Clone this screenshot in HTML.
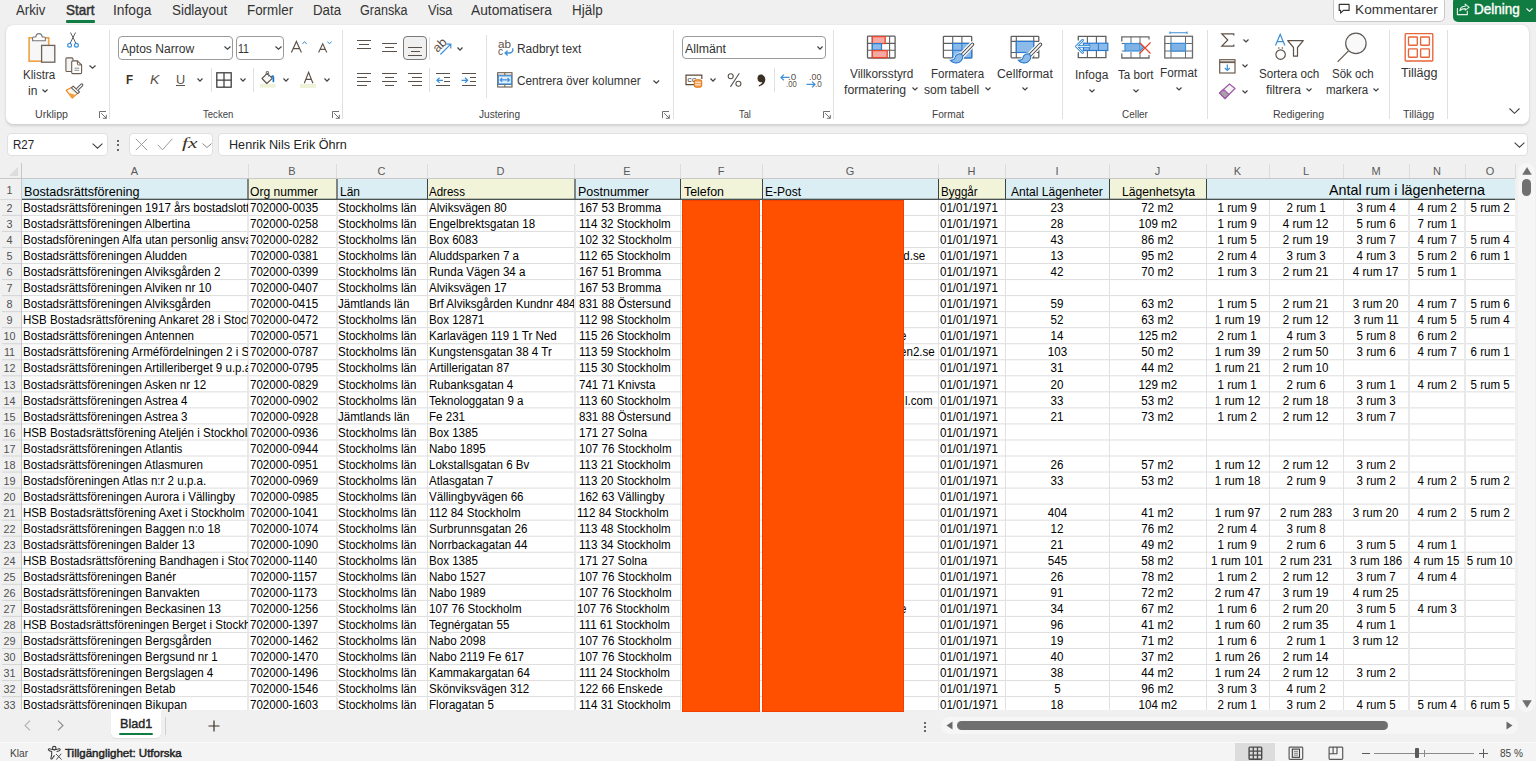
<!DOCTYPE html>
<html><head><meta charset="utf-8"><style>
*{margin:0;padding:0;box-sizing:border-box}
html,body{width:1536px;height:761px;overflow:hidden;background:#f0f0f0;font-family:"Liberation Sans", sans-serif;color:#1f1f1f;position:relative}
.a{position:absolute;white-space:nowrap}
.t{position:absolute;white-space:nowrap;line-height:1}
.cell{position:absolute;white-space:nowrap;overflow:hidden;font-size:12.5px;line-height:16px;height:16px;color:#000}
.cell span{display:inline-block;transform:scaleX(0.925);transform-origin:0 50%}
.cell.c span{transform-origin:50% 50%}
.cell.h{font-size:12.9px;height:19px;line-height:19px}
.hl{position:absolute;background:#e1e1e1}
svg{position:absolute;overflow:visible}
</style></head>
<body>
<div class="a" style="left:66px;top:20px;width:29px;height:2.5px;background:#107c41;border-radius:1px"></div>
<div class="a" style="left:1333px;top:-3px;width:112px;height:25px;background:#fff;border:1px solid #c7c7c7;border-radius:5px"></div>
<svg style="left:1334px;top:0px" width="20" height="16" viewBox="1334 0 20 16"><path d="M1339.2 4.4H1349.1V10.4H1343.4L1340.6 13.1V10.4H1339.2Z" fill="none" stroke="#333" stroke-width="1.15" stroke-linejoin="round"/></svg>
<div class="a" style="left:1453px;top:-3px;width:90px;height:24.5px;background:#107c41;border-radius:5px"></div>
<svg style="left:1452px;top:0px" width="22" height="18" viewBox="1452 0 22 18"><path d="M1457.4 8.1V14.6H1467.3V10.8" fill="none" stroke="#e8f3ec" stroke-width="1.1"/><path d="M1459.9 10.6C1460.2 7.8 1462 6.3 1465.2 6.2V4.1L1469.1 7.4 1465.2 10.1V8.6C1462.9 8.6 1461.3 9.2 1459.9 10.6Z" fill="none" stroke="#e8f3ec" stroke-width="1.05" stroke-linejoin="round"/></svg>
<svg style="left:1526px;top:8px" width="7" height="4" viewBox="0 0 7 4"><path d="M0.5 0.5L3.5 3.3 6.5 0.5" fill="none" stroke="#fff" stroke-width="1.1"/></svg>
<div class="a" style="left:5.5px;top:25px;width:1523px;height:99px;background:#fff;border-radius:7px;box-shadow:0 1.5px 3px rgba(0,0,0,0.13),0 0 1px rgba(0,0,0,0.10)"></div>
<div class="a" style="left:109px;top:30px;width:1px;height:88.5px;background:#e0e0e0"></div>
<div class="a" style="left:342px;top:30px;width:1px;height:88.5px;background:#e0e0e0"></div>
<div class="a" style="left:673px;top:30px;width:1px;height:88.5px;background:#e0e0e0"></div>
<div class="a" style="left:833px;top:30px;width:1px;height:88.5px;background:#e0e0e0"></div>
<div class="a" style="left:1062px;top:30px;width:1px;height:88.5px;background:#e0e0e0"></div>
<div class="a" style="left:1207px;top:30px;width:1px;height:88.5px;background:#e0e0e0"></div>
<div class="a" style="left:1389px;top:30px;width:1px;height:88.5px;background:#e0e0e0"></div>
<div class="a" style="left:1447px;top:30px;width:1px;height:88.5px;background:#e0e0e0"></div>
<svg style="left:98.5px;top:110.5px" width="8" height="8" viewBox="0 0 8 8"><path d="M0.5 7V0.5H7M2.2 2.2L7.3 7.3M7.3 3.8V7.3H3.8" fill="none" stroke="#616161" stroke-width="0.9"/></svg>
<svg style="left:331.6px;top:110.5px" width="8" height="8" viewBox="0 0 8 8"><path d="M0.5 7V0.5H7M2.2 2.2L7.3 7.3M7.3 3.8V7.3H3.8" fill="none" stroke="#616161" stroke-width="0.9"/></svg>
<svg style="left:662px;top:110.5px" width="8" height="8" viewBox="0 0 8 8"><path d="M0.5 7V0.5H7M2.2 2.2L7.3 7.3M7.3 3.8V7.3H3.8" fill="none" stroke="#616161" stroke-width="0.9"/></svg>
<svg style="left:822.5px;top:110.5px" width="8" height="8" viewBox="0 0 8 8"><path d="M0.5 7V0.5H7M2.2 2.2L7.3 7.3M7.3 3.8V7.3H3.8" fill="none" stroke="#616161" stroke-width="0.9"/></svg>
<svg style="left:1509px;top:107.5px" width="11" height="6" viewBox="0 0 11 6"><path d="M0.5 0.5L5.5 5.3 10.5 0.5" fill="none" stroke="#424242" stroke-width="1.1"/></svg>
<svg style="left:27px;top:32px" width="30" height="32" viewBox="0 0 30 32">
      <rect x="2.1" y="5.8" width="19.6" height="23.4" fill="#f7f7f7" stroke="#f0a040" stroke-width="1.6"/>
      <path d="M5.6 8.7V6C5.6 5.4 6 5 6.6 5H8.8C9 2.8 10 1.6 12 1.6S15 2.8 15.2 5H17.4C18 5 18.4 5.4 18.4 6V8.7z" fill="#fff" stroke="#767676" stroke-width="1.1"/>
      <rect x="14.6" y="13.4" width="13.2" height="16.8" fill="#f7f7f7" stroke="#6b6258" stroke-width="1.3"/>
    </svg>
<svg style="left:41.5px;top:89px" width="6" height="4" viewBox="0 0 6 4"><path d="M0.5 0.5L3 3 5.5 0.5" fill="none" stroke="#424242" stroke-width="1.2"/></svg>
<svg style="left:67px;top:32px" width="12" height="16" viewBox="0 0 12 16">
      <path d="M3 11.5L8.5 0.5M9 11.5L3.5 0.5" fill="none" stroke="#616161" stroke-width="1"/>
      <circle cx="2.6" cy="13.3" r="1.9" fill="none" stroke="#3c8fd9" stroke-width="1.2"/>
      <circle cx="9.4" cy="13.3" r="1.9" fill="none" stroke="#3c8fd9" stroke-width="1.2"/>
    </svg>
<svg style="left:62px;top:54px" width="24" height="22" viewBox="0 0 24 22">
      <path d="M11 6.4V5C11 4.3 10.5 3.9 9.9 3.9H5C4.4 3.9 3.9 4.4 3.9 5V16.4C3.9 17 4.4 17.5 5 17.5H9.7" fill="#f4f4f4" stroke="#6b5c4e" stroke-width="1.1"/>
      <path d="M9.7 7.9C9.7 7.3 10.2 6.9 10.8 6.9H15.4L19.6 10.9V18.5C19.6 19.1 19.1 19.6 18.5 19.6H10.8C10.2 19.6 9.7 19.1 9.7 18.5Z" fill="#fff" stroke="#6b5c4e" stroke-width="1.1" stroke-linejoin="round"/>
      <path d="M15.4 6.9V10C15.4 10.5 15.8 10.9 16.3 10.9H19.6" fill="none" stroke="#6b5c4e" stroke-width="1"/>
      <path d="M12.4 14.2H17.2M12.4 16.3H17.2" stroke="#808080" stroke-width="0.9"/>
    </svg>
<svg style="left:89px;top:65px" width="7" height="4" viewBox="0 0 7 4"><path d="M0.5 0.5L3.5 3.2 6.5 0.5" fill="none" stroke="#424242" stroke-width="1.2"/></svg>
<svg style="left:62px;top:82px" width="24" height="18" viewBox="0 0 24 18">
      <path d="M4.2 8.3L10.3 16.1 16.3 10.7 11.2 4.6Z" fill="#fff4ea" stroke="#e8891f" stroke-width="1.1" stroke-linejoin="round"/>
      <path d="M6.2 10.8L10.3 16.1 13.6 13.1Z" fill="#f0a040"/>
      <path d="M11.2 4.2L17.5 10 15.7 11.7 9.4 5.9Z" fill="#fff" stroke="#5f5f5f" stroke-width="1.1" stroke-linejoin="round"/>
      <path d="M14.2 6.8L19 2.2C19.5 1.7 20.2 1.8 20.6 2.3 21 2.8 21 3.4 20.5 3.9L15.8 8.4" fill="#fff" stroke="#5f5f5f" stroke-width="1.1"/>
    </svg>
<div class="a" style="left:118.3px;top:36px;width:114.5px;height:23.5px;border:1px solid #9a9a9a;border-radius:4px;background:#fff"></div>
<svg style="left:224px;top:46.3px" width="7" height="4" viewBox="0 0 7 4"><path d="M0.5 0.5L3.5 3.2 6.5 0.5" fill="none" stroke="#424242" stroke-width="1.2"/></svg>
<div class="a" style="left:235.5px;top:36px;width:48.5px;height:23.5px;border:1px solid #9a9a9a;border-radius:4px;background:#fff"></div>
<svg style="left:275px;top:46.3px" width="7" height="4" viewBox="0 0 7 4"><path d="M0.5 0.5L3.5 3.2 6.5 0.5" fill="none" stroke="#424242" stroke-width="1.2"/></svg>
<svg style="left:288px;top:39px" width="16" height="16" viewBox="288 39 16 16"><path d="M291.4 52.6L296.4 41.5 301.4 52.6M293.1 48.6H299.7" fill="none" stroke="#5c5148" stroke-width="1.15"/></svg>
<svg style="left:302px;top:41px" width="5" height="3.5" viewBox="0 0 5 3.5"><path d="M0.4 3L2.5 0.6 4.6 3" fill="none" stroke="#3c8fd9" stroke-width="1"/></svg>
<svg style="left:316px;top:41px" width="14" height="14" viewBox="316 41 14 14"><path d="M318.6 52.6L322.7 43.8 326.8 52.6M320 49.4H325.4" fill="none" stroke="#5c5148" stroke-width="1.1"/></svg>
<svg style="left:327px;top:41px" width="5" height="3.5" viewBox="0 0 5 3.5"><path d="M0.4 0.5L2.5 2.9 4.6 0.5" fill="none" stroke="#3c8fd9" stroke-width="1"/></svg>
<div class="a" style="left:175.6px;top:85.2px;width:9.5px;height:1px;background:#5c5148"></div>
<svg style="left:196.9px;top:78.3px" width="6" height="4" viewBox="0 0 6 4"><path d="M0.5 0.5L3 3.2 5.5 0.5" fill="none" stroke="#424242" stroke-width="1.2"/></svg>
<svg style="left:240px;top:78.3px" width="6" height="4" viewBox="0 0 6 4"><path d="M0.5 0.5L3 3.2 5.5 0.5" fill="none" stroke="#424242" stroke-width="1.2"/></svg>
<svg style="left:283px;top:78.3px" width="6" height="4" viewBox="0 0 6 4"><path d="M0.5 0.5L3 3.2 5.5 0.5" fill="none" stroke="#424242" stroke-width="1.2"/></svg>
<svg style="left:323.75px;top:78.3px" width="6" height="4" viewBox="0 0 6 4"><path d="M0.5 0.5L3 3.2 5.5 0.5" fill="none" stroke="#424242" stroke-width="1.2"/></svg>
<div class="a" style="left:210.5px;top:68px;width:1px;height:24px;background:#e0e0e0"></div>
<div class="a" style="left:253.4px;top:68px;width:1px;height:24px;background:#e0e0e0"></div>
<svg style="left:216px;top:72px" width="16" height="16" viewBox="0 0 16 16"><rect x="0.8" y="0.8" width="14.4" height="14.4" fill="none" stroke="#3f3f3f" stroke-width="1.3"/><path d="M8 0.8V15.2M0.8 8H15.2" stroke="#3f3f3f" stroke-width="1.25"/></svg>
<svg style="left:255px;top:66px" width="24" height="24" viewBox="255 66 24 24">
      <rect x="260" y="84" width="15.6" height="3.6" fill="#eef2d6"/>
      <path d="M262 78.5L267.2 73.3 272.3 78.3 266.8 83.5Z" fill="#f8f8f8" stroke="#5c5148" stroke-width="1.1" stroke-linejoin="round"/>
      <path d="M266.2 75V72.4C266.2 71.2 268.6 71.2 268.6 72.4V76.6" fill="none" stroke="#7a7a7a" stroke-width="1.1"/>
      <path d="M271.9 76.4C273.1 75.6 273.5 76.9 273.4 78V81.4" fill="none" stroke="#1a73c8" stroke-width="1.7" stroke-linecap="round"/>
    </svg>
<div class="a" style="left:300.3px;top:84px;width:15.9px;height:3.6px;background:#eef2d6"></div>
<svg style="left:300px;top:70px" width="16" height="15" viewBox="300 70 16 15"><path d="M304.3 83.2L308.6 72.4 312.9 83.2M305.8 79.3H311.4" fill="none" stroke="#5c5148" stroke-width="1.15"/></svg>
<div class="a" style="left:356.6px;top:39.699999999999996px;width:14.4px;height:1.2px;background:#5c5148"></div><div class="a" style="left:359.0px;top:44.0px;width:9.6px;height:1.2px;background:#5c5148"></div><div class="a" style="left:356.6px;top:48.0px;width:14.4px;height:1.2px;background:#5c5148"></div>
<div class="a" style="left:382px;top:42.699999999999996px;width:14.5px;height:1.2px;background:#5c5148"></div><div class="a" style="left:384.7px;top:46.8px;width:9.3px;height:1.2px;background:#5c5148"></div><div class="a" style="left:382px;top:50.9px;width:14.5px;height:1.2px;background:#5c5148"></div>
<div class="a" style="left:403.3px;top:36.4px;width:23.3px;height:23.2px;border:1px solid #7a7a7a;border-radius:4px;background:#f0f0f0"></div>
<div class="a" style="left:408.2px;top:46.8px;width:13.8px;height:1.2px;background:#5c5148"></div><div class="a" style="left:410.5px;top:50.8px;width:9.5px;height:1.2px;background:#5c5148"></div><div class="a" style="left:408.2px;top:54.699999999999996px;width:13.8px;height:1.2px;background:#5c5148"></div>
<div class="a" style="left:429px;top:36.5px;width:1px;height:23px;background:#e0e0e0"></div>
<svg style="left:434px;top:38px" width="20" height="18" viewBox="0 0 20 18">
      <text x="0" y="0" transform="translate(3.4,15) rotate(-45)" font-family="Liberation Sans" font-size="12.4" fill="#5c5148" textLength="14.5" lengthAdjust="spacingAndGlyphs">ab</text>
      <path d="M6.4 16.5L16.5 6.3M12.5 6.2H16.8V10.5" fill="none" stroke="#3c8fd9" stroke-width="1.2"/>
    </svg>
<svg style="left:457px;top:47px" width="6" height="4" viewBox="0 0 6 4"><path d="M0.5 0.5L3 3.2 5.5 0.5" fill="none" stroke="#424242" stroke-width="1.2"/></svg>
<div class="a" style="left:356.6px;top:72.9px;width:14.4px;height:1.2px;background:#5c5148"></div><div class="a" style="left:356.6px;top:77.0px;width:10.4px;height:1.2px;background:#5c5148"></div><div class="a" style="left:356.6px;top:81.0px;width:14.4px;height:1.2px;background:#5c5148"></div><div class="a" style="left:356.6px;top:85.0px;width:10.4px;height:1.2px;background:#5c5148"></div>
<div class="a" style="left:382px;top:72.9px;width:14.5px;height:1.2px;background:#5c5148"></div><div class="a" style="left:384.5px;top:77.0px;width:9.8px;height:1.2px;background:#5c5148"></div><div class="a" style="left:382px;top:81.0px;width:14.5px;height:1.2px;background:#5c5148"></div><div class="a" style="left:384.5px;top:85.0px;width:9.8px;height:1.2px;background:#5c5148"></div>
<div class="a" style="left:407.8px;top:72.9px;width:14.2px;height:1.2px;background:#5c5148"></div><div class="a" style="left:411.8px;top:77.0px;width:10.2px;height:1.2px;background:#5c5148"></div><div class="a" style="left:407.8px;top:81.0px;width:14.2px;height:1.2px;background:#5c5148"></div><div class="a" style="left:411.8px;top:85.0px;width:10.2px;height:1.2px;background:#5c5148"></div>
<div class="a" style="left:429px;top:68px;width:1px;height:24px;background:#e0e0e0"></div>
<div class="a" style="left:436px;top:72.9px;width:14px;height:1.2px;background:#5c5148"></div><div class="a" style="left:444px;top:77.0px;width:6px;height:1.2px;background:#5c5148"></div><div class="a" style="left:444px;top:81.0px;width:6px;height:1.2px;background:#5c5148"></div><div class="a" style="left:436px;top:85.0px;width:14px;height:1.2px;background:#5c5148"></div>
<div class="a" style="left:461.6px;top:72.9px;width:14.4px;height:1.2px;background:#5c5148"></div><div class="a" style="left:470.0px;top:77.0px;width:6.0px;height:1.2px;background:#5c5148"></div><div class="a" style="left:470.0px;top:81.0px;width:6.0px;height:1.2px;background:#5c5148"></div><div class="a" style="left:461.6px;top:85.0px;width:14.4px;height:1.2px;background:#5c5148"></div>
<svg style="left:435.5px;top:76.5px" width="8" height="7" viewBox="0 0 8 7"><path d="M7 3.3H1M3.6 0.7L0.9 3.3 3.6 5.9" fill="none" stroke="#3c8fd9" stroke-width="1.2"/></svg>
<svg style="left:461.2px;top:76.5px" width="8" height="7" viewBox="0 0 8 7"><path d="M0.5 3.3H6.7M4 0.7L6.7 3.3 4 5.9" fill="none" stroke="#3c8fd9" stroke-width="1.2"/></svg>
<div class="a" style="left:486px;top:34.5px;width:1px;height:63px;background:#e0e0e0"></div>
<svg style="left:498px;top:40px" width="17" height="17" viewBox="0 0 17 17">
      <text x="0" y="7.8" font-family="Liberation Sans" font-size="10" fill="#5c5148" textLength="13" lengthAdjust="spacingAndGlyphs">ab</text>
      <text x="0" y="15" font-family="Liberation Sans" font-size="10" fill="#5c5148">c</text>
      <path d="M14.6 8.2C15.4 11 14 13 11.5 13H7.2M9.6 10.6L7.1 13 9.6 15.5" fill="none" stroke="#3c8fd9" stroke-width="1.3"/>
    </svg>
<svg style="left:496.5px;top:72px" width="16" height="16" viewBox="0 0 16 16">
      <rect x="0.7" y="0.7" width="14.3" height="14.3" fill="#fff" stroke="#6b5c4e" stroke-width="1.1"/>
      <path d="M7.85 0.7V3.5M7.85 12.2V15M0.7 3.2H15M0.7 12.5H15" stroke="#6b5c4e" stroke-width="1"/>
      <rect x="1.3" y="3.8" width="13.2" height="8.2" fill="#e3eefb" stroke="#3c8fd9" stroke-width="1.2"/>
      <path d="M3.3 7.9H12.4M5.2 6L3.2 7.9 5.2 9.8M10.5 6L12.5 7.9 10.5 9.8" fill="none" stroke="#3c8fd9" stroke-width="1.1"/>
    </svg>
<svg style="left:653px;top:80.3px" width="7" height="4" viewBox="0 0 7 4"><path d="M0.5 0.5L3.3 3.2 6.1 0.5" fill="none" stroke="#424242" stroke-width="1.2"/></svg>
<div class="a" style="left:682.4px;top:36.2px;width:143.3px;height:23.3px;border:1px solid #9a9a9a;border-radius:4px;background:#fff"></div>
<svg style="left:817px;top:46.3px" width="7" height="4" viewBox="0 0 7 4"><path d="M0.5 0.5L3 3.2 5.5 0.5" fill="none" stroke="#424242" stroke-width="1.2"/></svg>
<svg style="left:682px;top:70px" width="24" height="20" viewBox="0 0 24 20">
      <path d="M12 14.6H4V5.2H19.8V9" fill="none" stroke="#5a4a3a" stroke-width="1.2"/>
      <text x="5.2" y="12.3" font-family="Liberation Sans" font-size="7" fill="#4a4a4a" textLength="9" lengthAdjust="spacingAndGlyphs">cc</text>
      <rect x="12.3" y="9.7" width="7.4" height="7.6" rx="2.2" fill="#f0a050" stroke="#e07b20" stroke-width="1.1"/>
      <path d="M13.2 12.3H18.8M13.2 14.8H18.8" stroke="#fff" stroke-width="0.9"/>
    </svg>
<svg style="left:710px;top:78.4px" width="6" height="4" viewBox="0 0 6 4"><path d="M0.5 0.5L3 3.2 5.5 0.5" fill="none" stroke="#424242" stroke-width="1.2"/></svg>
<svg style="left:725px;top:71px" width="18" height="18" viewBox="0 0 18 18"><circle cx="5.7" cy="5.3" r="2.5" fill="none" stroke="#5a5550" stroke-width="1.1"/><circle cx="13.4" cy="12.75" r="2.5" fill="none" stroke="#5a5550" stroke-width="1.1"/><path d="M14.3 2.2L5.4 15.9" stroke="#5a5550" stroke-width="1.1"/></svg>
<svg style="left:756.5px;top:74.2px" width="9" height="13" viewBox="0 0 9 13"><path d="M3.8 0.5C6.4 0.5 8.3 2.6 8.3 5.4 8.3 8.8 5.8 11.6 2 12.4L1.5 11.4C3.6 10.6 5 9.3 5.4 7.9 5 8.1 4.5 8.2 4 8.2 2 8.2 0.5 6.6 0.5 4.4S1.8 0.5 3.8 0.5z" fill="#3b3026"/></svg>
<div class="a" style="left:774px;top:68.4px;width:1px;height:23.3px;background:#e0e0e0"></div>
<svg style="left:780px;top:73.5px" width="10" height="7" viewBox="0 0 10 7"><path d="M9.5 3.4H1M3.9 0.6L1 3.4 3.9 6.2" fill="none" stroke="#3c8fd9" stroke-width="1.2"/></svg>
<svg style="left:806px;top:80.5px" width="10" height="7" viewBox="0 0 10 7"><path d="M0.5 3.4H9M6.1 0.6L9 3.4 6.1 6.2" fill="none" stroke="#3c8fd9" stroke-width="1.2"/></svg>
<svg style="left:862px;top:32px" width="38" height="30" viewBox="0 0 38 30">
      <rect x="5.5" y="4.1" width="27.6" height="21.9" rx="0.8" fill="#fff" stroke="#5f5f5f" stroke-width="1.3"/>
      <path d="M27.6 4.1V26M5.5 11.4H33.1M5.5 18.3H33.1M10.25 4.1V26" stroke="#5f5f5f" stroke-width="1.1"/>
      <rect x="10.3" y="4.6" width="12.9" height="6.9" fill="#f4aaa2" stroke="#e8472b" stroke-width="1.3"/>
      <rect x="10.3" y="11.6" width="9.2" height="6.5" fill="#8dbbe9" stroke="#2a7bd0" stroke-width="1.2"/>
      <rect x="10.3" y="18.6" width="14.9" height="7" fill="#f4aaa2" stroke="#e8472b" stroke-width="1.3"/>
    </svg>
<svg style="left:911.5px;top:86.8px" width="6" height="4" viewBox="0 0 6 4"><path d="M0.5 0.5L3 3 5.5 0.5" fill="none" stroke="#424242" stroke-width="1.2"/></svg>
<svg style="left:940px;top:32px" width="40" height="34" viewBox="0 0 40 34">
      <rect x="3.4" y="4.3" width="28.3" height="21.6" rx="0.8" fill="#fff" stroke="#5f5f5f" stroke-width="1.3"/>
      <path d="M12.7 4.3V25.9M21.9 4.3V25.9M3.4 11.4H31.7M3.4 18.3H31.7" stroke="#5f5f5f" stroke-width="1.1"/>
      <rect x="12.7" y="11.4" width="19" height="14.5" fill="#8dbbe9" stroke="#2a7bd0" stroke-width="1.2"/>
      <path d="M21.9 11.4V25.9M12.7 18.3H31.7" stroke="#2a7bd0" stroke-width="1"/>
      <path d="M32.4 12.4L21.6 23.6" stroke="#fff" stroke-width="6" stroke-linecap="round"/>
      <path d="M21.8 22.3C18.8 21 15.6 22.6 15 25.6 14.6 27.4 13 28.3 10.4 28.3 12.6 30.8 16.5 31.6 19.3 30.2 22.3 28.7 23.6 25.6 21.8 22.3Z" fill="#fff" stroke="#fff" stroke-width="2.6"/>
      <path d="M32.4 12.4L21.6 23.6" stroke="#4a4a4a" stroke-width="3.6" stroke-linecap="round"/>
      <path d="M32.4 12.4L21.6 23.6" stroke="#fff" stroke-width="1.6" stroke-linecap="round"/>
      <path d="M21.8 22.3C18.8 21 15.6 22.6 15 25.6 14.6 27.4 13 28.3 10.4 28.3 12.6 30.8 16.5 31.6 19.3 30.2 22.3 28.7 23.6 25.6 21.8 22.3Z" fill="#8dbbe9" stroke="#2a7bd0" stroke-width="1.1"/>
    </svg>
<svg style="left:984.5px;top:86.8px" width="6" height="4" viewBox="0 0 6 4"><path d="M0.5 0.5L3 3 5.5 0.5" fill="none" stroke="#424242" stroke-width="1.2"/></svg>
<svg style="left:1008px;top:32px" width="40" height="34" viewBox="0 0 40 34">
      <rect x="3.1" y="4.3" width="27.7" height="21.6" rx="0.8" fill="#fff" stroke="#5f5f5f" stroke-width="1.3"/>
      <path d="M8.3 4.3V25.9M25.7 4.3V25.9M3.1 9.4H30.8M3.1 20.5H30.8" stroke="#5f5f5f" stroke-width="1.1"/>
      <rect x="8.3" y="9.4" width="17.4" height="11.1" fill="#8dbbe9" stroke="#2a7bd0" stroke-width="1.2"/>
      <path d="M32.4 12.4L21.6 23.6" stroke="#fff" stroke-width="6" stroke-linecap="round"/>
      <path d="M21.8 22.3C18.8 21 15.6 22.6 15 25.6 14.6 27.4 13 28.3 10.4 28.3 12.6 30.8 16.5 31.6 19.3 30.2 22.3 28.7 23.6 25.6 21.8 22.3Z" fill="#fff" stroke="#fff" stroke-width="2.6"/>
      <path d="M32.4 12.4L21.6 23.6" stroke="#4a4a4a" stroke-width="3.6" stroke-linecap="round"/>
      <path d="M32.4 12.4L21.6 23.6" stroke="#fff" stroke-width="1.6" stroke-linecap="round"/>
      <path d="M21.8 22.3C18.8 21 15.6 22.6 15 25.6 14.6 27.4 13 28.3 10.4 28.3 12.6 30.8 16.5 31.6 19.3 30.2 22.3 28.7 23.6 25.6 21.8 22.3Z" fill="#8dbbe9" stroke="#2a7bd0" stroke-width="1.1"/>
    </svg>
<svg style="left:1021.5px;top:87.2px" width="6" height="4" viewBox="0 0 6 4"><path d="M0.5 0.5L3 3 5.5 0.5" fill="none" stroke="#424242" stroke-width="1.2"/></svg>
<svg style="left:1072px;top:32px" width="40" height="30" viewBox="0 0 40 30">
      <path d="M6.3 8.6V4.3H33.9V25.6H6.3V20.2" fill="#fff" stroke="#5f5f5f" stroke-width="1.3"/>
      <path d="M15.4 4.3V25.6M24.4 4.3V25.6" stroke="#5f5f5f" stroke-width="1.1"/>
      <rect x="11.4" y="11.2" width="24.4" height="7.3" fill="#8dbbe9" stroke="#2a7bd0" stroke-width="1.2"/>
      <path d="M17.3 11.2V18.5M26.4 11.2V18.5" stroke="#2a7bd0" stroke-width="1"/>
      <path d="M10.6 8.3L4.4 14.4 10.6 20.5M4.8 14.4H17.3" fill="none" stroke="#3c8fd9" stroke-width="2.7" stroke-linecap="round" stroke-linejoin="round"/>
      <path d="M10.6 8.3L4.4 14.4 10.6 20.5M4.8 14.4H17.3" fill="none" stroke="#fff" stroke-width="0.9" stroke-linecap="round" stroke-linejoin="round"/>
    </svg>
<svg style="left:1089.3px;top:88.6px" width="6" height="4" viewBox="0 0 6 4"><path d="M0.5 0.5L3 3 5.5 0.5" fill="none" stroke="#424242" stroke-width="1.2"/></svg>
<svg style="left:1121px;top:36px" width="31" height="23" viewBox="0 0 31 23">
      <path d="M0.8 5.5V0.8H28V3.5M0.8 17.5V22H28V19" fill="none" stroke="#6a6a6a" stroke-width="1.3"/>
      <path d="M10 0.8V7M19 0.8V7M10 16V22M19 16V22M0.8 7.5H4.5M0.8 15H4.5" fill="none" stroke="#6a6a6a" stroke-width="1"/>
      <rect x="4" y="7.5" width="15" height="7.5" fill="#7fb2e5" stroke="#3c8fd9" stroke-width="1.2"/>
      <path d="M19 7.5L23 11.2 19 15" fill="#7fb2e5" stroke="#3c8fd9" stroke-width="1.1"/>
      <path d="M18.5 6.5L29.5 17.5M29.5 6.5L18.5 17.5" stroke="#e8472b" stroke-width="1.3"/>
    </svg>
<svg style="left:1132.6px;top:88.6px" width="6" height="4" viewBox="0 0 6 4"><path d="M0.5 0.5L3 3 5.5 0.5" fill="none" stroke="#424242" stroke-width="1.2"/></svg>
<svg style="left:1164px;top:31px" width="30" height="28" viewBox="0 0 30 28">
      <path d="M6 1.8H23M6 0.5V3M23 0.5V3" stroke="#3c8fd9" stroke-width="1.1"/>
      <rect x="0.8" y="5.3" width="27.7" height="21.7" fill="#fff" stroke="#6a6a6a" stroke-width="1.3"/>
      <path d="M7 5.3V27M21.5 5.3V27M0.8 12.5H28.5M0.8 20H28.5" stroke="#6a6a6a" stroke-width="1"/>
      <rect x="7" y="12.3" width="14.5" height="7.7" fill="#7fb2e5" stroke="#3c8fd9" stroke-width="1.2"/>
    </svg>
<svg style="left:1175.5px;top:86.8px" width="6" height="4" viewBox="0 0 6 4"><path d="M0.5 0.5L3 3 5.5 0.5" fill="none" stroke="#424242" stroke-width="1.2"/></svg>
<svg style="left:1220.5px;top:33px" width="14" height="14" viewBox="0 0 14 14"><path d="M12.8 2.5V0.8H0.8L6.8 7 0.8 13.2H12.8V11.5" fill="none" stroke="#5c5148" stroke-width="1.2" stroke-linejoin="miter"/></svg>
<svg style="left:1243.3px;top:38.6px" width="6" height="4" viewBox="0 0 6 4"><path d="M0.5 0.5L3 3 5.5 0.5" fill="none" stroke="#424242" stroke-width="1.2"/></svg>
<svg style="left:1242px;top:63.8px" width="6" height="4" viewBox="0 0 6 4"><path d="M0.5 0.5L3 3 5.5 0.5" fill="none" stroke="#424242" stroke-width="1.2"/></svg>
<svg style="left:1242px;top:89.6px" width="6" height="4" viewBox="0 0 6 4"><path d="M0.5 0.5L3 3 5.5 0.5" fill="none" stroke="#424242" stroke-width="1.2"/></svg>
<svg style="left:1219px;top:58.5px" width="17" height="15" viewBox="0 0 17 15">
      <rect x="0.7" y="0.7" width="15.3" height="13.3" fill="#fff" stroke="#6b5c4e" stroke-width="1.2"/>
      <path d="M0.7 3.2H16" stroke="#6b5c4e" stroke-width="1.8"/>
      <path d="M8.3 5.5V11.5M5.8 9L8.3 11.5 10.8 9" fill="none" stroke="#3c8fd9" stroke-width="1.2"/>
    </svg>
<svg style="left:1212px;top:78px" width="30" height="26" viewBox="0 0 30 26">
      <path d="M7.5 15L17.5 6 23 10.5 13 20.5z" fill="#f4f4f4" stroke="#a05aa8" stroke-width="1.2" stroke-linejoin="round"/>
      <path d="M7.5 15L11.5 11.4 17 16.5 13 20.5z" fill="#a9a0aa" stroke="#a05aa8" stroke-width="1.2" stroke-linejoin="round"/>
    </svg>
<svg style="left:1270px;top:30px" width="20" height="34" viewBox="0 0 20 34">
      <path d="M5.5 15.6L10.2 4.3 14.9 15.6M7.3 11.5H13.1" fill="none" stroke="#3c8fd9" stroke-width="1.25"/>
      <circle cx="10.6" cy="24.6" r="4.7" fill="none" stroke="#5c5148" stroke-width="1.15"/>
      <circle cx="8.8" cy="17.9" r="0.75" fill="#5c5148"/><circle cx="12.4" cy="17.9" r="0.75" fill="#5c5148"/>
    </svg>
<svg style="left:1287px;top:40px" width="18" height="17" viewBox="0 0 18 17"><path d="M0.7 0.7H16.3L10.5 7.5V16.2H6.5V7.5z" fill="none" stroke="#5c5148" stroke-width="1.2" stroke-linejoin="round"/></svg>
<svg style="left:1306px;top:87.8px" width="6" height="4" viewBox="0 0 6 4"><path d="M0.5 0.5L3 3 5.5 0.5" fill="none" stroke="#424242" stroke-width="1.2"/></svg>
<svg style="left:1334px;top:30px" width="36" height="36" viewBox="1334 30 36 36"><circle cx="1355.9" cy="43.4" r="10.2" fill="#f9f9f9" stroke="#5f5a55" stroke-width="1.2"/><path d="M1348.5 50.8L1337.6 61.8" stroke="#5c5148" stroke-width="1.2"/></svg>
<svg style="left:1372.8px;top:87.8px" width="6" height="4" viewBox="0 0 6 4"><path d="M0.5 0.5L3 3 5.5 0.5" fill="none" stroke="#424242" stroke-width="1.2"/></svg>
<svg style="left:1400px;top:30px" width="38" height="34" viewBox="1400 30 38 34">
      <rect x="1405.2" y="33.6" width="27.6" height="27.4" rx="0.8" fill="#fff" stroke="#e8643a" stroke-width="1.35"/>
      <rect x="1408.5" y="37" width="8.8" height="8.2" rx="0.6" fill="none" stroke="#e8643a" stroke-width="1.35"/>
      <rect x="1420.6" y="37" width="8.8" height="8.2" rx="0.6" fill="none" stroke="#e8643a" stroke-width="1.35"/>
      <rect x="1408.5" y="48.9" width="8.8" height="8.3" rx="0.6" fill="none" stroke="#e8643a" stroke-width="1.35"/>
      <rect x="1420.6" y="48.9" width="8.8" height="8.3" rx="0.6" fill="none" stroke="#e8643a" stroke-width="1.35"/>
    </svg>
<div class="a" style="left:21px;top:179px;width:1494px;height:531px;background:#fff"></div>
<div class="a" style="left:21px;top:179px;width:227px;height:20px;background:#daeef3"></div>
<div class="a" style="left:248px;top:179px;width:88px;height:20px;background:#f2f4da"></div>
<div class="a" style="left:336px;top:179px;width:91px;height:20px;background:#daeef3"></div>
<div class="a" style="left:427px;top:179px;width:147px;height:20px;background:#f2f4da"></div>
<div class="a" style="left:574px;top:179px;width:106px;height:20px;background:#daeef3"></div>
<div class="a" style="left:680px;top:179px;width:82px;height:20px;background:#f2f4da"></div>
<div class="a" style="left:762px;top:179px;width:176px;height:20px;background:#daeef3"></div>
<div class="a" style="left:938px;top:179px;width:67px;height:20px;background:#f2f4da"></div>
<div class="a" style="left:1005px;top:179px;width:104px;height:20px;background:#daeef3"></div>
<div class="a" style="left:1109px;top:179px;width:97px;height:20px;background:#f2f4da"></div>
<div class="a" style="left:1206px;top:179px;width:309px;height:20px;background:#daeef3"></div>
<div class="a" style="left:21px;top:214px;width:1494px;height:1px;background:rgba(200,200,200,0.062)"></div>
<div class="a" style="left:21px;top:215px;width:1494px;height:1px;background:rgba(200,200,200,0.558)"></div>
<div class="a" style="left:21px;top:230px;width:1494px;height:1px;background:rgba(200,200,200,0.037)"></div>
<div class="a" style="left:21px;top:231px;width:1494px;height:1px;background:rgba(200,200,200,0.583)"></div>
<div class="a" style="left:21px;top:247px;width:1494px;height:1px;background:rgba(200,200,200,0.608)"></div>
<div class="a" style="left:21px;top:263px;width:1494px;height:1px;background:rgba(200,200,200,0.608)"></div>
<div class="a" style="left:21px;top:279px;width:1494px;height:1px;background:rgba(200,200,200,0.583)"></div>
<div class="a" style="left:21px;top:280px;width:1494px;height:1px;background:rgba(200,200,200,0.037)"></div>
<div class="a" style="left:21px;top:295px;width:1494px;height:1px;background:rgba(200,200,200,0.558)"></div>
<div class="a" style="left:21px;top:296px;width:1494px;height:1px;background:rgba(200,200,200,0.062)"></div>
<div class="a" style="left:21px;top:311px;width:1494px;height:1px;background:rgba(200,200,200,0.533)"></div>
<div class="a" style="left:21px;top:312px;width:1494px;height:1px;background:rgba(200,200,200,0.087)"></div>
<div class="a" style="left:21px;top:327px;width:1494px;height:1px;background:rgba(200,200,200,0.508)"></div>
<div class="a" style="left:21px;top:328px;width:1494px;height:1px;background:rgba(200,200,200,0.112)"></div>
<div class="a" style="left:21px;top:343px;width:1494px;height:1px;background:rgba(200,200,200,0.484)"></div>
<div class="a" style="left:21px;top:344px;width:1494px;height:1px;background:rgba(200,200,200,0.136)"></div>
<div class="a" style="left:21px;top:359px;width:1494px;height:1px;background:rgba(200,200,200,0.459)"></div>
<div class="a" style="left:21px;top:360px;width:1494px;height:1px;background:rgba(200,200,200,0.161)"></div>
<div class="a" style="left:21px;top:375px;width:1494px;height:1px;background:rgba(200,200,200,0.434)"></div>
<div class="a" style="left:21px;top:376px;width:1494px;height:1px;background:rgba(200,200,200,0.186)"></div>
<div class="a" style="left:21px;top:391px;width:1494px;height:1px;background:rgba(200,200,200,0.409)"></div>
<div class="a" style="left:21px;top:392px;width:1494px;height:1px;background:rgba(200,200,200,0.211)"></div>
<div class="a" style="left:21px;top:407px;width:1494px;height:1px;background:rgba(200,200,200,0.384)"></div>
<div class="a" style="left:21px;top:408px;width:1494px;height:1px;background:rgba(200,200,200,0.236)"></div>
<div class="a" style="left:21px;top:423px;width:1494px;height:1px;background:rgba(200,200,200,0.360)"></div>
<div class="a" style="left:21px;top:424px;width:1494px;height:1px;background:rgba(200,200,200,0.260)"></div>
<div class="a" style="left:21px;top:439px;width:1494px;height:1px;background:rgba(200,200,200,0.335)"></div>
<div class="a" style="left:21px;top:440px;width:1494px;height:1px;background:rgba(200,200,200,0.285)"></div>
<div class="a" style="left:21px;top:455px;width:1494px;height:1px;background:rgba(200,200,200,0.310)"></div>
<div class="a" style="left:21px;top:456px;width:1494px;height:1px;background:rgba(200,200,200,0.310)"></div>
<div class="a" style="left:21px;top:471px;width:1494px;height:1px;background:rgba(200,200,200,0.285)"></div>
<div class="a" style="left:21px;top:472px;width:1494px;height:1px;background:rgba(200,200,200,0.335)"></div>
<div class="a" style="left:21px;top:487px;width:1494px;height:1px;background:rgba(200,200,200,0.260)"></div>
<div class="a" style="left:21px;top:488px;width:1494px;height:1px;background:rgba(200,200,200,0.360)"></div>
<div class="a" style="left:21px;top:503px;width:1494px;height:1px;background:rgba(200,200,200,0.236)"></div>
<div class="a" style="left:21px;top:504px;width:1494px;height:1px;background:rgba(200,200,200,0.384)"></div>
<div class="a" style="left:21px;top:519px;width:1494px;height:1px;background:rgba(200,200,200,0.211)"></div>
<div class="a" style="left:21px;top:520px;width:1494px;height:1px;background:rgba(200,200,200,0.409)"></div>
<div class="a" style="left:21px;top:535px;width:1494px;height:1px;background:rgba(200,200,200,0.186)"></div>
<div class="a" style="left:21px;top:536px;width:1494px;height:1px;background:rgba(200,200,200,0.434)"></div>
<div class="a" style="left:21px;top:551px;width:1494px;height:1px;background:rgba(200,200,200,0.161)"></div>
<div class="a" style="left:21px;top:552px;width:1494px;height:1px;background:rgba(200,200,200,0.459)"></div>
<div class="a" style="left:21px;top:567px;width:1494px;height:1px;background:rgba(200,200,200,0.136)"></div>
<div class="a" style="left:21px;top:568px;width:1494px;height:1px;background:rgba(200,200,200,0.484)"></div>
<div class="a" style="left:21px;top:583px;width:1494px;height:1px;background:rgba(200,200,200,0.112)"></div>
<div class="a" style="left:21px;top:584px;width:1494px;height:1px;background:rgba(200,200,200,0.508)"></div>
<div class="a" style="left:21px;top:599px;width:1494px;height:1px;background:rgba(200,200,200,0.087)"></div>
<div class="a" style="left:21px;top:600px;width:1494px;height:1px;background:rgba(200,200,200,0.533)"></div>
<div class="a" style="left:21px;top:615px;width:1494px;height:1px;background:rgba(200,200,200,0.062)"></div>
<div class="a" style="left:21px;top:616px;width:1494px;height:1px;background:rgba(200,200,200,0.558)"></div>
<div class="a" style="left:21px;top:631px;width:1494px;height:1px;background:rgba(200,200,200,0.037)"></div>
<div class="a" style="left:21px;top:632px;width:1494px;height:1px;background:rgba(200,200,200,0.583)"></div>
<div class="a" style="left:21px;top:648px;width:1494px;height:1px;background:rgba(200,200,200,0.608)"></div>
<div class="a" style="left:21px;top:664px;width:1494px;height:1px;background:rgba(200,200,200,0.608)"></div>
<div class="a" style="left:21px;top:680px;width:1494px;height:1px;background:rgba(200,200,200,0.583)"></div>
<div class="a" style="left:21px;top:681px;width:1494px;height:1px;background:rgba(200,200,200,0.037)"></div>
<div class="a" style="left:21px;top:696px;width:1494px;height:1px;background:rgba(200,200,200,0.558)"></div>
<div class="a" style="left:21px;top:697px;width:1494px;height:1px;background:rgba(200,200,200,0.062)"></div>
<div class="hl" style="left:247px;top:200px;width:2px;height:510px;background:#e9e9e9"></div>
<div class="hl" style="left:336px;top:200px;width:2px;height:510px;background:#e9e9e9"></div>
<div class="hl" style="left:427px;top:200px;width:1px;height:510px"></div>
<div class="hl" style="left:574px;top:200px;width:2px;height:510px;background:#e9e9e9"></div>
<div class="hl" style="left:680px;top:200px;width:1px;height:510px"></div>
<div class="hl" style="left:762px;top:200px;width:1px;height:510px"></div>
<div class="hl" style="left:938px;top:200px;width:1px;height:510px"></div>
<div class="hl" style="left:1005px;top:200px;width:1px;height:510px"></div>
<div class="hl" style="left:1109px;top:200px;width:1px;height:510px"></div>
<div class="hl" style="left:1206px;top:200px;width:1px;height:510px"></div>
<div class="hl" style="left:1269px;top:200px;width:1px;height:510px"></div>
<div class="hl" style="left:1343px;top:200px;width:1px;height:510px"></div>
<div class="hl" style="left:1408px;top:200px;width:2px;height:510px;background:#e9e9e9"></div>
<div class="hl" style="left:1464px;top:200px;width:2px;height:510px;background:#e9e9e9"></div>
<div class="a" style="left:247px;top:179px;width:2px;height:21px;background:#7d8585"></div>
<div class="a" style="left:336px;top:179px;width:2px;height:21px;background:#7d8585"></div>
<div class="a" style="left:427px;top:179px;width:1px;height:21px;background:#3c4444"></div>
<div class="a" style="left:574px;top:179px;width:2px;height:21px;background:#7d8585"></div>
<div class="a" style="left:680px;top:179px;width:1px;height:21px;background:#3c4444"></div>
<div class="a" style="left:762px;top:179px;width:1px;height:21px;background:#3c4444"></div>
<div class="a" style="left:938px;top:179px;width:1px;height:21px;background:#3c4444"></div>
<div class="a" style="left:1005px;top:179px;width:1px;height:21px;background:#3c4444"></div>
<div class="a" style="left:1109px;top:179px;width:1px;height:21px;background:#3c4444"></div>
<div class="a" style="left:1206px;top:179px;width:1px;height:21px;background:#3c4444"></div>
<div class="a" style="left:21px;top:199px;width:1494px;height:1px;background:#4a5252"></div>
<div class="a" style="left:21px;top:198px;width:1494px;height:1px;background:rgba(80,90,90,0.35)"></div>
<div class="cell" style="left:23px;top:200px;width:225px;text-align:left;"><span>Bostadsrättsföreningen 1917 års bostadslotteri</span></div>
<div class="cell" style="left:250px;top:200px;width:86px;text-align:left;"><span>702000-0035</span></div>
<div class="cell" style="left:338px;top:200px;width:89px;text-align:left;"><span>Stockholms län</span></div>
<div class="cell" style="left:429px;top:200px;width:145px;text-align:left;"><span>Alviksvägen 80</span></div>
<div class="cell" style="left:579px;top:200px;width:101px;text-align:left;"><span>167 53 Bromma</span></div>
<div class="cell" style="left:940px;top:200px;width:65px;text-align:left;"><span>01/01/1971</span></div>
<div class="cell c" style="left:1005px;top:200px;width:104px;text-align:center;"><span>23</span></div>
<div class="cell c" style="left:1109px;top:200px;width:97px;text-align:center;"><span>72 m2</span></div>
<div class="cell c" style="left:1206px;top:200px;width:63px;text-align:center;"><span>1 rum 9</span></div>
<div class="cell c" style="left:1269px;top:200px;width:74px;text-align:center;"><span>2 rum 1</span></div>
<div class="cell c" style="left:1343px;top:200px;width:66px;text-align:center;"><span>3 rum 4</span></div>
<div class="cell c" style="left:1409px;top:200px;width:56px;text-align:center;"><span>4 rum 2</span></div>
<div class="cell c" style="left:1465px;top:200px;width:50px;text-align:center;"><span>5 rum 2</span></div>
<div class="cell" style="left:23px;top:216px;width:225px;text-align:left;"><span>Bostadsrättsföreningen Albertina</span></div>
<div class="cell" style="left:250px;top:216px;width:86px;text-align:left;"><span>702000-0258</span></div>
<div class="cell" style="left:338px;top:216px;width:89px;text-align:left;"><span>Stockholms län</span></div>
<div class="cell" style="left:429px;top:216px;width:145px;text-align:left;"><span>Engelbrektsgatan 18</span></div>
<div class="cell" style="left:579px;top:216px;width:101px;text-align:left;"><span>114 32 Stockholm</span></div>
<div class="cell" style="left:940px;top:216px;width:65px;text-align:left;"><span>01/01/1971</span></div>
<div class="cell c" style="left:1005px;top:216px;width:104px;text-align:center;"><span>28</span></div>
<div class="cell c" style="left:1109px;top:216px;width:97px;text-align:center;"><span>109 m2</span></div>
<div class="cell c" style="left:1206px;top:216px;width:63px;text-align:center;"><span>1 rum 9</span></div>
<div class="cell c" style="left:1269px;top:216px;width:74px;text-align:center;"><span>4 rum 12</span></div>
<div class="cell c" style="left:1343px;top:216px;width:66px;text-align:center;"><span>5 rum 6</span></div>
<div class="cell c" style="left:1409px;top:216px;width:56px;text-align:center;"><span>7 rum 1</span></div>

<div class="cell" style="left:23px;top:232px;width:225px;text-align:left;"><span>Bostadsföreningen Alfa utan personlig ansvarighet</span></div>
<div class="cell" style="left:250px;top:232px;width:86px;text-align:left;"><span>702000-0282</span></div>
<div class="cell" style="left:338px;top:232px;width:89px;text-align:left;"><span>Stockholms län</span></div>
<div class="cell" style="left:429px;top:232px;width:145px;text-align:left;"><span>Box 6083</span></div>
<div class="cell" style="left:579px;top:232px;width:101px;text-align:left;"><span>102 32 Stockholm</span></div>
<div class="cell" style="left:940px;top:232px;width:65px;text-align:left;"><span>01/01/1971</span></div>
<div class="cell c" style="left:1005px;top:232px;width:104px;text-align:center;"><span>43</span></div>
<div class="cell c" style="left:1109px;top:232px;width:97px;text-align:center;"><span>86 m2</span></div>
<div class="cell c" style="left:1206px;top:232px;width:63px;text-align:center;"><span>1 rum 5</span></div>
<div class="cell c" style="left:1269px;top:232px;width:74px;text-align:center;"><span>2 rum 19</span></div>
<div class="cell c" style="left:1343px;top:232px;width:66px;text-align:center;"><span>3 rum 7</span></div>
<div class="cell c" style="left:1409px;top:232px;width:56px;text-align:center;"><span>4 rum 7</span></div>
<div class="cell c" style="left:1465px;top:232px;width:50px;text-align:center;"><span>5 rum 4</span></div>
<div class="cell" style="left:23px;top:248px;width:225px;text-align:left;"><span>Bostadsrättsföreningen Aludden</span></div>
<div class="cell" style="left:250px;top:248px;width:86px;text-align:left;"><span>702000-0381</span></div>
<div class="cell" style="left:338px;top:248px;width:89px;text-align:left;"><span>Stockholms län</span></div>
<div class="cell" style="left:429px;top:248px;width:145px;text-align:left;"><span>Aluddsparken 7 a</span></div>
<div class="cell" style="left:579px;top:248px;width:101px;text-align:left;"><span>112 65 Stockholm</span></div>
<div class="cell" style="left:940px;top:248px;width:65px;text-align:left;"><span>01/01/1971</span></div>
<div class="cell c" style="left:1005px;top:248px;width:104px;text-align:center;"><span>13</span></div>
<div class="cell c" style="left:1109px;top:248px;width:97px;text-align:center;"><span>95 m2</span></div>
<div class="cell c" style="left:1206px;top:248px;width:63px;text-align:center;"><span>2 rum 4</span></div>
<div class="cell c" style="left:1269px;top:248px;width:74px;text-align:center;"><span>3 rum 3</span></div>
<div class="cell c" style="left:1343px;top:248px;width:66px;text-align:center;"><span>4 rum 3</span></div>
<div class="cell c" style="left:1409px;top:248px;width:56px;text-align:center;"><span>5 rum 2</span></div>
<div class="cell c" style="left:1465px;top:248px;width:50px;text-align:center;"><span>6 rum 1</span></div>
<div class="cell" style="left:23px;top:264px;width:225px;text-align:left;"><span>Bostadsrättsföreningen Alviksgården 2</span></div>
<div class="cell" style="left:250px;top:264px;width:86px;text-align:left;"><span>702000-0399</span></div>
<div class="cell" style="left:338px;top:264px;width:89px;text-align:left;"><span>Stockholms län</span></div>
<div class="cell" style="left:429px;top:264px;width:145px;text-align:left;"><span>Runda Vägen 34 a</span></div>
<div class="cell" style="left:579px;top:264px;width:101px;text-align:left;"><span>167 51 Bromma</span></div>
<div class="cell" style="left:940px;top:264px;width:65px;text-align:left;"><span>01/01/1971</span></div>
<div class="cell c" style="left:1005px;top:264px;width:104px;text-align:center;"><span>42</span></div>
<div class="cell c" style="left:1109px;top:264px;width:97px;text-align:center;"><span>70 m2</span></div>
<div class="cell c" style="left:1206px;top:264px;width:63px;text-align:center;"><span>1 rum 3</span></div>
<div class="cell c" style="left:1269px;top:264px;width:74px;text-align:center;"><span>2 rum 21</span></div>
<div class="cell c" style="left:1343px;top:264px;width:66px;text-align:center;"><span>4 rum 17</span></div>
<div class="cell c" style="left:1409px;top:264px;width:56px;text-align:center;"><span>5 rum 1</span></div>

<div class="cell" style="left:23px;top:280px;width:225px;text-align:left;"><span>Bostadsrättsföreningen Alviken nr 10</span></div>
<div class="cell" style="left:250px;top:280px;width:86px;text-align:left;"><span>702000-0407</span></div>
<div class="cell" style="left:338px;top:280px;width:89px;text-align:left;"><span>Stockholms län</span></div>
<div class="cell" style="left:429px;top:280px;width:145px;text-align:left;"><span>Alviksvägen 17</span></div>
<div class="cell" style="left:579px;top:280px;width:101px;text-align:left;"><span>167 53 Bromma</span></div>
<div class="cell" style="left:940px;top:280px;width:65px;text-align:left;"><span>01/01/1971</span></div>







<div class="cell" style="left:23px;top:296px;width:225px;text-align:left;"><span>Bostadsrättsföreningen Alviksgården</span></div>
<div class="cell" style="left:250px;top:296px;width:86px;text-align:left;"><span>702000-0415</span></div>
<div class="cell" style="left:338px;top:296px;width:89px;text-align:left;"><span>Jämtlands län</span></div>
<div class="cell" style="left:429px;top:296px;width:145px;text-align:left;"><span>Brf Alviksgården Kundnr 484</span></div>
<div class="cell" style="left:579px;top:296px;width:101px;text-align:left;"><span>831 88 Östersund</span></div>
<div class="cell" style="left:940px;top:296px;width:65px;text-align:left;"><span>01/01/1971</span></div>
<div class="cell c" style="left:1005px;top:296px;width:104px;text-align:center;"><span>59</span></div>
<div class="cell c" style="left:1109px;top:296px;width:97px;text-align:center;"><span>63 m2</span></div>
<div class="cell c" style="left:1206px;top:296px;width:63px;text-align:center;"><span>1 rum 5</span></div>
<div class="cell c" style="left:1269px;top:296px;width:74px;text-align:center;"><span>2 rum 21</span></div>
<div class="cell c" style="left:1343px;top:296px;width:66px;text-align:center;"><span>3 rum 20</span></div>
<div class="cell c" style="left:1409px;top:296px;width:56px;text-align:center;"><span>4 rum 7</span></div>
<div class="cell c" style="left:1465px;top:296px;width:50px;text-align:center;"><span>5 rum 6</span></div>
<div class="cell" style="left:23px;top:312px;width:225px;text-align:left;"><span>HSB Bostadsrättsförening Ankaret 28 i Stockholm</span></div>
<div class="cell" style="left:250px;top:312px;width:86px;text-align:left;"><span>702000-0472</span></div>
<div class="cell" style="left:338px;top:312px;width:89px;text-align:left;"><span>Stockholms län</span></div>
<div class="cell" style="left:429px;top:312px;width:145px;text-align:left;"><span>Box 12871</span></div>
<div class="cell" style="left:579px;top:312px;width:101px;text-align:left;"><span>112 98 Stockholm</span></div>
<div class="cell" style="left:940px;top:312px;width:65px;text-align:left;"><span>01/01/1971</span></div>
<div class="cell c" style="left:1005px;top:312px;width:104px;text-align:center;"><span>52</span></div>
<div class="cell c" style="left:1109px;top:312px;width:97px;text-align:center;"><span>63 m2</span></div>
<div class="cell c" style="left:1206px;top:312px;width:63px;text-align:center;"><span>1 rum 19</span></div>
<div class="cell c" style="left:1269px;top:312px;width:74px;text-align:center;"><span>2 rum 12</span></div>
<div class="cell c" style="left:1343px;top:312px;width:66px;text-align:center;"><span>3 rum 11</span></div>
<div class="cell c" style="left:1409px;top:312px;width:56px;text-align:center;"><span>4 rum 5</span></div>
<div class="cell c" style="left:1465px;top:312px;width:50px;text-align:center;"><span>5 rum 4</span></div>
<div class="cell" style="left:23px;top:328px;width:225px;text-align:left;"><span>Bostadsrättsföreningen Antennen</span></div>
<div class="cell" style="left:250px;top:328px;width:86px;text-align:left;"><span>702000-0571</span></div>
<div class="cell" style="left:338px;top:328px;width:89px;text-align:left;"><span>Stockholms län</span></div>
<div class="cell" style="left:429px;top:328px;width:145px;text-align:left;"><span>Karlavägen 119 1 Tr Ned</span></div>
<div class="cell" style="left:579px;top:328px;width:101px;text-align:left;"><span>115 26 Stockholm</span></div>
<div class="cell" style="left:940px;top:328px;width:65px;text-align:left;"><span>01/01/1971</span></div>
<div class="cell c" style="left:1005px;top:328px;width:104px;text-align:center;"><span>14</span></div>
<div class="cell c" style="left:1109px;top:328px;width:97px;text-align:center;"><span>125 m2</span></div>
<div class="cell c" style="left:1206px;top:328px;width:63px;text-align:center;"><span>2 rum 1</span></div>
<div class="cell c" style="left:1269px;top:328px;width:74px;text-align:center;"><span>4 rum 3</span></div>
<div class="cell c" style="left:1343px;top:328px;width:66px;text-align:center;"><span>5 rum 8</span></div>
<div class="cell c" style="left:1409px;top:328px;width:56px;text-align:center;"><span>6 rum 2</span></div>

<div class="cell" style="left:23px;top:344px;width:225px;text-align:left;"><span>Bostadsrättsförening Arméfördelningen 2 i Stockholm</span></div>
<div class="cell" style="left:250px;top:344px;width:86px;text-align:left;"><span>702000-0787</span></div>
<div class="cell" style="left:338px;top:344px;width:89px;text-align:left;"><span>Stockholms län</span></div>
<div class="cell" style="left:429px;top:344px;width:145px;text-align:left;"><span>Kungstensgatan 38 4 Tr</span></div>
<div class="cell" style="left:579px;top:344px;width:101px;text-align:left;"><span>113 59 Stockholm</span></div>
<div class="cell" style="left:940px;top:344px;width:65px;text-align:left;"><span>01/01/1971</span></div>
<div class="cell c" style="left:1005px;top:344px;width:104px;text-align:center;"><span>103</span></div>
<div class="cell c" style="left:1109px;top:344px;width:97px;text-align:center;"><span>50 m2</span></div>
<div class="cell c" style="left:1206px;top:344px;width:63px;text-align:center;"><span>1 rum 39</span></div>
<div class="cell c" style="left:1269px;top:344px;width:74px;text-align:center;"><span>2 rum 50</span></div>
<div class="cell c" style="left:1343px;top:344px;width:66px;text-align:center;"><span>3 rum 6</span></div>
<div class="cell c" style="left:1409px;top:344px;width:56px;text-align:center;"><span>4 rum 7</span></div>
<div class="cell c" style="left:1465px;top:344px;width:50px;text-align:center;"><span>6 rum 1</span></div>
<div class="cell" style="left:23px;top:360px;width:225px;text-align:left;"><span>Bostadsrättsföreningen Artilleriberget 9 u.p.a.</span></div>
<div class="cell" style="left:250px;top:360px;width:86px;text-align:left;"><span>702000-0795</span></div>
<div class="cell" style="left:338px;top:360px;width:89px;text-align:left;"><span>Stockholms län</span></div>
<div class="cell" style="left:429px;top:360px;width:145px;text-align:left;"><span>Artillerigatan 87</span></div>
<div class="cell" style="left:579px;top:360px;width:101px;text-align:left;"><span>115 30 Stockholm</span></div>
<div class="cell" style="left:940px;top:360px;width:65px;text-align:left;"><span>01/01/1971</span></div>
<div class="cell c" style="left:1005px;top:360px;width:104px;text-align:center;"><span>31</span></div>
<div class="cell c" style="left:1109px;top:360px;width:97px;text-align:center;"><span>44 m2</span></div>
<div class="cell c" style="left:1206px;top:360px;width:63px;text-align:center;"><span>1 rum 21</span></div>
<div class="cell c" style="left:1269px;top:360px;width:74px;text-align:center;"><span>2 rum 10</span></div>



<div class="cell" style="left:23px;top:377px;width:225px;text-align:left;"><span>Bostadsrättsföreningen Asken nr 12</span></div>
<div class="cell" style="left:250px;top:377px;width:86px;text-align:left;"><span>702000-0829</span></div>
<div class="cell" style="left:338px;top:377px;width:89px;text-align:left;"><span>Stockholms län</span></div>
<div class="cell" style="left:429px;top:377px;width:145px;text-align:left;"><span>Rubanksgatan 4</span></div>
<div class="cell" style="left:579px;top:377px;width:101px;text-align:left;"><span>741 71 Knivsta</span></div>
<div class="cell" style="left:940px;top:377px;width:65px;text-align:left;"><span>01/01/1971</span></div>
<div class="cell c" style="left:1005px;top:377px;width:104px;text-align:center;"><span>20</span></div>
<div class="cell c" style="left:1109px;top:377px;width:97px;text-align:center;"><span>129 m2</span></div>
<div class="cell c" style="left:1206px;top:377px;width:63px;text-align:center;"><span>1 rum 1</span></div>
<div class="cell c" style="left:1269px;top:377px;width:74px;text-align:center;"><span>2 rum 6</span></div>
<div class="cell c" style="left:1343px;top:377px;width:66px;text-align:center;"><span>3 rum 1</span></div>
<div class="cell c" style="left:1409px;top:377px;width:56px;text-align:center;"><span>4 rum 2</span></div>
<div class="cell c" style="left:1465px;top:377px;width:50px;text-align:center;"><span>5 rum 5</span></div>
<div class="cell" style="left:23px;top:393px;width:225px;text-align:left;"><span>Bostadsrättsföreningen Astrea 4</span></div>
<div class="cell" style="left:250px;top:393px;width:86px;text-align:left;"><span>702000-0902</span></div>
<div class="cell" style="left:338px;top:393px;width:89px;text-align:left;"><span>Stockholms län</span></div>
<div class="cell" style="left:429px;top:393px;width:145px;text-align:left;"><span>Teknologgatan 9 a</span></div>
<div class="cell" style="left:579px;top:393px;width:101px;text-align:left;"><span>113 60 Stockholm</span></div>
<div class="cell" style="left:940px;top:393px;width:65px;text-align:left;"><span>01/01/1971</span></div>
<div class="cell c" style="left:1005px;top:393px;width:104px;text-align:center;"><span>33</span></div>
<div class="cell c" style="left:1109px;top:393px;width:97px;text-align:center;"><span>53 m2</span></div>
<div class="cell c" style="left:1206px;top:393px;width:63px;text-align:center;"><span>1 rum 12</span></div>
<div class="cell c" style="left:1269px;top:393px;width:74px;text-align:center;"><span>2 rum 18</span></div>
<div class="cell c" style="left:1343px;top:393px;width:66px;text-align:center;"><span>3 rum 3</span></div>


<div class="cell" style="left:23px;top:409px;width:225px;text-align:left;"><span>Bostadsrättsföreningen Astrea 3</span></div>
<div class="cell" style="left:250px;top:409px;width:86px;text-align:left;"><span>702000-0928</span></div>
<div class="cell" style="left:338px;top:409px;width:89px;text-align:left;"><span>Jämtlands län</span></div>
<div class="cell" style="left:429px;top:409px;width:145px;text-align:left;"><span>Fe 231</span></div>
<div class="cell" style="left:579px;top:409px;width:101px;text-align:left;"><span>831 88 Östersund</span></div>
<div class="cell" style="left:940px;top:409px;width:65px;text-align:left;"><span>01/01/1971</span></div>
<div class="cell c" style="left:1005px;top:409px;width:104px;text-align:center;"><span>21</span></div>
<div class="cell c" style="left:1109px;top:409px;width:97px;text-align:center;"><span>73 m2</span></div>
<div class="cell c" style="left:1206px;top:409px;width:63px;text-align:center;"><span>1 rum 2</span></div>
<div class="cell c" style="left:1269px;top:409px;width:74px;text-align:center;"><span>2 rum 12</span></div>
<div class="cell c" style="left:1343px;top:409px;width:66px;text-align:center;"><span>3 rum 7</span></div>


<div class="cell" style="left:23px;top:425px;width:225px;text-align:left;"><span>HSB Bostadsrättsförening Ateljén i Stockholm</span></div>
<div class="cell" style="left:250px;top:425px;width:86px;text-align:left;"><span>702000-0936</span></div>
<div class="cell" style="left:338px;top:425px;width:89px;text-align:left;"><span>Stockholms län</span></div>
<div class="cell" style="left:429px;top:425px;width:145px;text-align:left;"><span>Box 1385</span></div>
<div class="cell" style="left:579px;top:425px;width:101px;text-align:left;"><span>171 27 Solna</span></div>
<div class="cell" style="left:940px;top:425px;width:65px;text-align:left;"><span>01/01/1971</span></div>







<div class="cell" style="left:23px;top:441px;width:225px;text-align:left;"><span>Bostadsrättsföreningen Atlantis</span></div>
<div class="cell" style="left:250px;top:441px;width:86px;text-align:left;"><span>702000-0944</span></div>
<div class="cell" style="left:338px;top:441px;width:89px;text-align:left;"><span>Stockholms län</span></div>
<div class="cell" style="left:429px;top:441px;width:145px;text-align:left;"><span>Nabo 1895</span></div>
<div class="cell" style="left:579px;top:441px;width:101px;text-align:left;"><span>107 76 Stockholm</span></div>
<div class="cell" style="left:940px;top:441px;width:65px;text-align:left;"><span>01/01/1971</span></div>







<div class="cell" style="left:23px;top:457px;width:225px;text-align:left;"><span>Bostadsrättsföreningen Atlasmuren</span></div>
<div class="cell" style="left:250px;top:457px;width:86px;text-align:left;"><span>702000-0951</span></div>
<div class="cell" style="left:338px;top:457px;width:89px;text-align:left;"><span>Stockholms län</span></div>
<div class="cell" style="left:429px;top:457px;width:145px;text-align:left;"><span>Lokstallsgatan 6 Bv</span></div>
<div class="cell" style="left:579px;top:457px;width:101px;text-align:left;"><span>113 21 Stockholm</span></div>
<div class="cell" style="left:940px;top:457px;width:65px;text-align:left;"><span>01/01/1971</span></div>
<div class="cell c" style="left:1005px;top:457px;width:104px;text-align:center;"><span>26</span></div>
<div class="cell c" style="left:1109px;top:457px;width:97px;text-align:center;"><span>57 m2</span></div>
<div class="cell c" style="left:1206px;top:457px;width:63px;text-align:center;"><span>1 rum 12</span></div>
<div class="cell c" style="left:1269px;top:457px;width:74px;text-align:center;"><span>2 rum 12</span></div>
<div class="cell c" style="left:1343px;top:457px;width:66px;text-align:center;"><span>3 rum 2</span></div>


<div class="cell" style="left:23px;top:473px;width:225px;text-align:left;"><span>Bostadsföreningen Atlas n:r 2 u.p.a.</span></div>
<div class="cell" style="left:250px;top:473px;width:86px;text-align:left;"><span>702000-0969</span></div>
<div class="cell" style="left:338px;top:473px;width:89px;text-align:left;"><span>Stockholms län</span></div>
<div class="cell" style="left:429px;top:473px;width:145px;text-align:left;"><span>Atlasgatan 7</span></div>
<div class="cell" style="left:579px;top:473px;width:101px;text-align:left;"><span>113 20 Stockholm</span></div>
<div class="cell" style="left:940px;top:473px;width:65px;text-align:left;"><span>01/01/1971</span></div>
<div class="cell c" style="left:1005px;top:473px;width:104px;text-align:center;"><span>33</span></div>
<div class="cell c" style="left:1109px;top:473px;width:97px;text-align:center;"><span>53 m2</span></div>
<div class="cell c" style="left:1206px;top:473px;width:63px;text-align:center;"><span>1 rum 18</span></div>
<div class="cell c" style="left:1269px;top:473px;width:74px;text-align:center;"><span>2 rum 9</span></div>
<div class="cell c" style="left:1343px;top:473px;width:66px;text-align:center;"><span>3 rum 2</span></div>
<div class="cell c" style="left:1409px;top:473px;width:56px;text-align:center;"><span>4 rum 2</span></div>
<div class="cell c" style="left:1465px;top:473px;width:50px;text-align:center;"><span>5 rum 2</span></div>
<div class="cell" style="left:23px;top:489px;width:225px;text-align:left;"><span>Bostadsrättsföreningen Aurora i Vällingby</span></div>
<div class="cell" style="left:250px;top:489px;width:86px;text-align:left;"><span>702000-0985</span></div>
<div class="cell" style="left:338px;top:489px;width:89px;text-align:left;"><span>Stockholms län</span></div>
<div class="cell" style="left:429px;top:489px;width:145px;text-align:left;"><span>Vällingbyvägen 66</span></div>
<div class="cell" style="left:579px;top:489px;width:101px;text-align:left;"><span>162 63 Vällingby</span></div>
<div class="cell" style="left:940px;top:489px;width:65px;text-align:left;"><span>01/01/1971</span></div>







<div class="cell" style="left:23px;top:505px;width:225px;text-align:left;"><span>HSB Bostadsrättsförening Axet i Stockholm</span></div>
<div class="cell" style="left:250px;top:505px;width:86px;text-align:left;"><span>702000-1041</span></div>
<div class="cell" style="left:338px;top:505px;width:89px;text-align:left;"><span>Stockholms län</span></div>
<div class="cell" style="left:429px;top:505px;width:145px;text-align:left;"><span>112 84 Stockholm</span></div>
<div class="cell" style="left:577px;top:505px;width:103px;text-align:left;"><span>112 84 Stockholm</span></div>
<div class="cell" style="left:940px;top:505px;width:65px;text-align:left;"><span>01/01/1971</span></div>
<div class="cell c" style="left:1005px;top:505px;width:104px;text-align:center;"><span>404</span></div>
<div class="cell c" style="left:1109px;top:505px;width:97px;text-align:center;"><span>41 m2</span></div>
<div class="cell c" style="left:1206px;top:505px;width:63px;text-align:center;"><span>1 rum 97</span></div>
<div class="cell c" style="left:1269px;top:505px;width:74px;text-align:center;"><span>2 rum 283</span></div>
<div class="cell c" style="left:1343px;top:505px;width:66px;text-align:center;"><span>3 rum 20</span></div>
<div class="cell c" style="left:1409px;top:505px;width:56px;text-align:center;"><span>4 rum 2</span></div>
<div class="cell c" style="left:1465px;top:505px;width:50px;text-align:center;"><span>5 rum 2</span></div>
<div class="cell" style="left:23px;top:521px;width:225px;text-align:left;"><span>Bostadsrättsföreningen Baggen n:o 18</span></div>
<div class="cell" style="left:250px;top:521px;width:86px;text-align:left;"><span>702000-1074</span></div>
<div class="cell" style="left:338px;top:521px;width:89px;text-align:left;"><span>Stockholms län</span></div>
<div class="cell" style="left:429px;top:521px;width:145px;text-align:left;"><span>Surbrunnsgatan 26</span></div>
<div class="cell" style="left:579px;top:521px;width:101px;text-align:left;"><span>113 48 Stockholm</span></div>
<div class="cell" style="left:940px;top:521px;width:65px;text-align:left;"><span>01/01/1971</span></div>
<div class="cell c" style="left:1005px;top:521px;width:104px;text-align:center;"><span>12</span></div>
<div class="cell c" style="left:1109px;top:521px;width:97px;text-align:center;"><span>76 m2</span></div>
<div class="cell c" style="left:1206px;top:521px;width:63px;text-align:center;"><span>2 rum 4</span></div>
<div class="cell c" style="left:1269px;top:521px;width:74px;text-align:center;"><span>3 rum 8</span></div>



<div class="cell" style="left:23px;top:537px;width:225px;text-align:left;"><span>Bostadsrättsföreningen Balder 13</span></div>
<div class="cell" style="left:250px;top:537px;width:86px;text-align:left;"><span>702000-1090</span></div>
<div class="cell" style="left:338px;top:537px;width:89px;text-align:left;"><span>Stockholms län</span></div>
<div class="cell" style="left:429px;top:537px;width:145px;text-align:left;"><span>Norrbackagatan 44</span></div>
<div class="cell" style="left:579px;top:537px;width:101px;text-align:left;"><span>113 34 Stockholm</span></div>
<div class="cell" style="left:940px;top:537px;width:65px;text-align:left;"><span>01/01/1971</span></div>
<div class="cell c" style="left:1005px;top:537px;width:104px;text-align:center;"><span>21</span></div>
<div class="cell c" style="left:1109px;top:537px;width:97px;text-align:center;"><span>49 m2</span></div>
<div class="cell c" style="left:1206px;top:537px;width:63px;text-align:center;"><span>1 rum 9</span></div>
<div class="cell c" style="left:1269px;top:537px;width:74px;text-align:center;"><span>2 rum 6</span></div>
<div class="cell c" style="left:1343px;top:537px;width:66px;text-align:center;"><span>3 rum 5</span></div>
<div class="cell c" style="left:1409px;top:537px;width:56px;text-align:center;"><span>4 rum 1</span></div>

<div class="cell" style="left:23px;top:553px;width:225px;text-align:left;"><span>HSB Bostadsrättsförening Bandhagen i Stockholm</span></div>
<div class="cell" style="left:250px;top:553px;width:86px;text-align:left;"><span>702000-1140</span></div>
<div class="cell" style="left:338px;top:553px;width:89px;text-align:left;"><span>Stockholms län</span></div>
<div class="cell" style="left:429px;top:553px;width:145px;text-align:left;"><span>Box 1385</span></div>
<div class="cell" style="left:579px;top:553px;width:101px;text-align:left;"><span>171 27 Solna</span></div>
<div class="cell" style="left:940px;top:553px;width:65px;text-align:left;"><span>01/01/1971</span></div>
<div class="cell c" style="left:1005px;top:553px;width:104px;text-align:center;"><span>545</span></div>
<div class="cell c" style="left:1109px;top:553px;width:97px;text-align:center;"><span>58 m2</span></div>
<div class="cell c" style="left:1206px;top:553px;width:63px;text-align:center;"><span>1 rum 101</span></div>
<div class="cell c" style="left:1269px;top:553px;width:74px;text-align:center;"><span>2 rum 231</span></div>
<div class="cell c" style="left:1343px;top:553px;width:66px;text-align:center;"><span>3 rum 186</span></div>
<div class="cell c" style="left:1409px;top:553px;width:56px;text-align:center;"><span>4 rum 15</span></div>
<div class="cell c" style="left:1465px;top:553px;width:50px;text-align:center;"><span>5 rum 10</span></div>
<div class="cell" style="left:23px;top:569px;width:225px;text-align:left;"><span>Bostadsrättsföreningen Banér</span></div>
<div class="cell" style="left:250px;top:569px;width:86px;text-align:left;"><span>702000-1157</span></div>
<div class="cell" style="left:338px;top:569px;width:89px;text-align:left;"><span>Stockholms län</span></div>
<div class="cell" style="left:429px;top:569px;width:145px;text-align:left;"><span>Nabo 1527</span></div>
<div class="cell" style="left:579px;top:569px;width:101px;text-align:left;"><span>107 76 Stockholm</span></div>
<div class="cell" style="left:940px;top:569px;width:65px;text-align:left;"><span>01/01/1971</span></div>
<div class="cell c" style="left:1005px;top:569px;width:104px;text-align:center;"><span>26</span></div>
<div class="cell c" style="left:1109px;top:569px;width:97px;text-align:center;"><span>78 m2</span></div>
<div class="cell c" style="left:1206px;top:569px;width:63px;text-align:center;"><span>1 rum 2</span></div>
<div class="cell c" style="left:1269px;top:569px;width:74px;text-align:center;"><span>2 rum 12</span></div>
<div class="cell c" style="left:1343px;top:569px;width:66px;text-align:center;"><span>3 rum 7</span></div>
<div class="cell c" style="left:1409px;top:569px;width:56px;text-align:center;"><span>4 rum 4</span></div>

<div class="cell" style="left:23px;top:585px;width:225px;text-align:left;"><span>Bostadsrättsföreningen Banvakten</span></div>
<div class="cell" style="left:250px;top:585px;width:86px;text-align:left;"><span>702000-1173</span></div>
<div class="cell" style="left:338px;top:585px;width:89px;text-align:left;"><span>Stockholms län</span></div>
<div class="cell" style="left:429px;top:585px;width:145px;text-align:left;"><span>Nabo 1989</span></div>
<div class="cell" style="left:579px;top:585px;width:101px;text-align:left;"><span>107 76 Stockholm</span></div>
<div class="cell" style="left:940px;top:585px;width:65px;text-align:left;"><span>01/01/1971</span></div>
<div class="cell c" style="left:1005px;top:585px;width:104px;text-align:center;"><span>91</span></div>
<div class="cell c" style="left:1109px;top:585px;width:97px;text-align:center;"><span>72 m2</span></div>
<div class="cell c" style="left:1206px;top:585px;width:63px;text-align:center;"><span>2 rum 47</span></div>
<div class="cell c" style="left:1269px;top:585px;width:74px;text-align:center;"><span>3 rum 19</span></div>
<div class="cell c" style="left:1343px;top:585px;width:66px;text-align:center;"><span>4 rum 25</span></div>


<div class="cell" style="left:23px;top:601px;width:225px;text-align:left;"><span>Bostadsrättsföreningen Beckasinen 13</span></div>
<div class="cell" style="left:250px;top:601px;width:86px;text-align:left;"><span>702000-1256</span></div>
<div class="cell" style="left:338px;top:601px;width:89px;text-align:left;"><span>Stockholms län</span></div>
<div class="cell" style="left:429px;top:601px;width:145px;text-align:left;"><span>107 76 Stockholm</span></div>
<div class="cell" style="left:577px;top:601px;width:103px;text-align:left;"><span>107 76 Stockholm</span></div>
<div class="cell" style="left:940px;top:601px;width:65px;text-align:left;"><span>01/01/1971</span></div>
<div class="cell c" style="left:1005px;top:601px;width:104px;text-align:center;"><span>34</span></div>
<div class="cell c" style="left:1109px;top:601px;width:97px;text-align:center;"><span>67 m2</span></div>
<div class="cell c" style="left:1206px;top:601px;width:63px;text-align:center;"><span>1 rum 6</span></div>
<div class="cell c" style="left:1269px;top:601px;width:74px;text-align:center;"><span>2 rum 20</span></div>
<div class="cell c" style="left:1343px;top:601px;width:66px;text-align:center;"><span>3 rum 5</span></div>
<div class="cell c" style="left:1409px;top:601px;width:56px;text-align:center;"><span>4 rum 3</span></div>

<div class="cell" style="left:23px;top:617px;width:225px;text-align:left;"><span>HSB Bostadsrättsföreningen Berget i Stockholm</span></div>
<div class="cell" style="left:250px;top:617px;width:86px;text-align:left;"><span>702000-1397</span></div>
<div class="cell" style="left:338px;top:617px;width:89px;text-align:left;"><span>Stockholms län</span></div>
<div class="cell" style="left:429px;top:617px;width:145px;text-align:left;"><span>Tegnérgatan 55</span></div>
<div class="cell" style="left:579px;top:617px;width:101px;text-align:left;"><span>111 61 Stockholm</span></div>
<div class="cell" style="left:940px;top:617px;width:65px;text-align:left;"><span>01/01/1971</span></div>
<div class="cell c" style="left:1005px;top:617px;width:104px;text-align:center;"><span>96</span></div>
<div class="cell c" style="left:1109px;top:617px;width:97px;text-align:center;"><span>41 m2</span></div>
<div class="cell c" style="left:1206px;top:617px;width:63px;text-align:center;"><span>1 rum 60</span></div>
<div class="cell c" style="left:1269px;top:617px;width:74px;text-align:center;"><span>2 rum 35</span></div>
<div class="cell c" style="left:1343px;top:617px;width:66px;text-align:center;"><span>4 rum 1</span></div>


<div class="cell" style="left:23px;top:633px;width:225px;text-align:left;"><span>Bostadsrättsföreningen Bergsgården</span></div>
<div class="cell" style="left:250px;top:633px;width:86px;text-align:left;"><span>702000-1462</span></div>
<div class="cell" style="left:338px;top:633px;width:89px;text-align:left;"><span>Stockholms län</span></div>
<div class="cell" style="left:429px;top:633px;width:145px;text-align:left;"><span>Nabo 2098</span></div>
<div class="cell" style="left:579px;top:633px;width:101px;text-align:left;"><span>107 76 Stockholm</span></div>
<div class="cell" style="left:940px;top:633px;width:65px;text-align:left;"><span>01/01/1971</span></div>
<div class="cell c" style="left:1005px;top:633px;width:104px;text-align:center;"><span>19</span></div>
<div class="cell c" style="left:1109px;top:633px;width:97px;text-align:center;"><span>71 m2</span></div>
<div class="cell c" style="left:1206px;top:633px;width:63px;text-align:center;"><span>1 rum 6</span></div>
<div class="cell c" style="left:1269px;top:633px;width:74px;text-align:center;"><span>2 rum 1</span></div>
<div class="cell c" style="left:1343px;top:633px;width:66px;text-align:center;"><span>3 rum 12</span></div>


<div class="cell" style="left:23px;top:649px;width:225px;text-align:left;"><span>Bostadsrättsföreningen Bergsund nr 1</span></div>
<div class="cell" style="left:250px;top:649px;width:86px;text-align:left;"><span>702000-1470</span></div>
<div class="cell" style="left:338px;top:649px;width:89px;text-align:left;"><span>Stockholms län</span></div>
<div class="cell" style="left:429px;top:649px;width:145px;text-align:left;"><span>Nabo 2119 Fe 617</span></div>
<div class="cell" style="left:579px;top:649px;width:101px;text-align:left;"><span>107 76 Stockholm</span></div>
<div class="cell" style="left:940px;top:649px;width:65px;text-align:left;"><span>01/01/1971</span></div>
<div class="cell c" style="left:1005px;top:649px;width:104px;text-align:center;"><span>40</span></div>
<div class="cell c" style="left:1109px;top:649px;width:97px;text-align:center;"><span>37 m2</span></div>
<div class="cell c" style="left:1206px;top:649px;width:63px;text-align:center;"><span>1 rum 26</span></div>
<div class="cell c" style="left:1269px;top:649px;width:74px;text-align:center;"><span>2 rum 14</span></div>



<div class="cell" style="left:23px;top:665px;width:225px;text-align:left;"><span>Bostadsrättsföreningen Bergslagen 4</span></div>
<div class="cell" style="left:250px;top:665px;width:86px;text-align:left;"><span>702000-1496</span></div>
<div class="cell" style="left:338px;top:665px;width:89px;text-align:left;"><span>Stockholms län</span></div>
<div class="cell" style="left:429px;top:665px;width:145px;text-align:left;"><span>Kammakargatan 64</span></div>
<div class="cell" style="left:579px;top:665px;width:101px;text-align:left;"><span>111 24 Stockholm</span></div>
<div class="cell" style="left:940px;top:665px;width:65px;text-align:left;"><span>01/01/1971</span></div>
<div class="cell c" style="left:1005px;top:665px;width:104px;text-align:center;"><span>38</span></div>
<div class="cell c" style="left:1109px;top:665px;width:97px;text-align:center;"><span>44 m2</span></div>
<div class="cell c" style="left:1206px;top:665px;width:63px;text-align:center;"><span>1 rum 24</span></div>
<div class="cell c" style="left:1269px;top:665px;width:74px;text-align:center;"><span>2 rum 12</span></div>
<div class="cell c" style="left:1343px;top:665px;width:66px;text-align:center;"><span>3 rum 2</span></div>


<div class="cell" style="left:23px;top:681px;width:225px;text-align:left;"><span>Bostadsrättsföreningen Betab</span></div>
<div class="cell" style="left:250px;top:681px;width:86px;text-align:left;"><span>702000-1546</span></div>
<div class="cell" style="left:338px;top:681px;width:89px;text-align:left;"><span>Stockholms län</span></div>
<div class="cell" style="left:429px;top:681px;width:145px;text-align:left;"><span>Skönviksvägen 312</span></div>
<div class="cell" style="left:579px;top:681px;width:101px;text-align:left;"><span>122 66 Enskede</span></div>
<div class="cell" style="left:940px;top:681px;width:65px;text-align:left;"><span>01/01/1971</span></div>
<div class="cell c" style="left:1005px;top:681px;width:104px;text-align:center;"><span>5</span></div>
<div class="cell c" style="left:1109px;top:681px;width:97px;text-align:center;"><span>96 m2</span></div>
<div class="cell c" style="left:1206px;top:681px;width:63px;text-align:center;"><span>3 rum 3</span></div>
<div class="cell c" style="left:1269px;top:681px;width:74px;text-align:center;"><span>4 rum 2</span></div>



<div class="cell" style="left:23px;top:697px;width:225px;text-align:left;"><span>Bostadsrättsföreningen Bikupan</span></div>
<div class="cell" style="left:250px;top:697px;width:86px;text-align:left;"><span>702000-1603</span></div>
<div class="cell" style="left:338px;top:697px;width:89px;text-align:left;"><span>Stockholms län</span></div>
<div class="cell" style="left:429px;top:697px;width:145px;text-align:left;"><span>Floragatan 5</span></div>
<div class="cell" style="left:579px;top:697px;width:101px;text-align:left;"><span>114 31 Stockholm</span></div>
<div class="cell" style="left:940px;top:697px;width:65px;text-align:left;"><span>01/01/1971</span></div>
<div class="cell c" style="left:1005px;top:697px;width:104px;text-align:center;"><span>18</span></div>
<div class="cell c" style="left:1109px;top:697px;width:97px;text-align:center;"><span>104 m2</span></div>
<div class="cell c" style="left:1206px;top:697px;width:63px;text-align:center;"><span>2 rum 1</span></div>
<div class="cell c" style="left:1269px;top:697px;width:74px;text-align:center;"><span>3 rum 2</span></div>
<div class="cell c" style="left:1343px;top:697px;width:66px;text-align:center;"><span>4 rum 5</span></div>
<div class="cell c" style="left:1409px;top:697px;width:56px;text-align:center;"><span>5 rum 4</span></div>
<div class="cell c" style="left:1465px;top:697px;width:50px;text-align:center;"><span>6 rum 5</span></div>
<div class="cell" style="left:725px;top:248px;width:200px;text-align:right"><span style="transform-origin:100% 50%">aaaaaaaaaaaaaard.se</span></div>
<div class="cell" style="left:707px;top:328px;width:200px;text-align:right"><span style="transform-origin:100% 50%">aaaaaaaaaaaaaase</span></div>
<div class="cell" style="left:735px;top:344px;width:200px;text-align:right"><span style="transform-origin:100% 50%">aaaaaaaaaaaaaaaaen2.se</span></div>
<div class="cell" style="left:733px;top:393px;width:200px;text-align:right"><span style="transform-origin:100% 50%">aaaaaaaaaaaaaa&nbsp;l.com</span></div>
<div class="cell" style="left:707px;top:601px;width:200px;text-align:right"><span style="transform-origin:100% 50%">aaaaaaaaaaaaaase</span></div>
<div class="a" style="left:682px;top:200px;width:78px;height:512px;background:#ff5000;box-shadow:inset 0 0 0 1px rgba(235,45,0,0.55)"></div>
<div class="a" style="left:762px;top:200px;width:142px;height:512px;background:#ff5000;box-shadow:inset 0 0 0 1px rgba(235,45,0,0.55)"></div>
<div class="t" style="left:-1px;top:180px;width:21px;height:20px;line-height:20px;text-align:center;font-size:10.8px;color:#505050">1</div>
<div class="a" style="left:0;top:199px;width:21px;height:1px;background:#dadada"></div>
<div class="t" style="left:-1px;top:200px;width:21px;height:16px;line-height:16px;text-align:center;font-size:10.8px;color:#505050">2</div>
<div class="a" style="left:2px;top:214px;width:19px;height:1px;background:rgba(190,190,190,0.055)"></div>
<div class="a" style="left:2px;top:215px;width:19px;height:1px;background:rgba(190,190,190,0.495)"></div>
<div class="t" style="left:-1px;top:216px;width:21px;height:16px;line-height:16px;text-align:center;font-size:10.8px;color:#505050">3</div>
<div class="a" style="left:2px;top:230px;width:19px;height:1px;background:rgba(190,190,190,0.033)"></div>
<div class="a" style="left:2px;top:231px;width:19px;height:1px;background:rgba(190,190,190,0.517)"></div>
<div class="t" style="left:-1px;top:232px;width:21px;height:16px;line-height:16px;text-align:center;font-size:10.8px;color:#505050">4</div>
<div class="a" style="left:2px;top:247px;width:19px;height:1px;background:rgba(190,190,190,0.539)"></div>
<div class="t" style="left:-1px;top:248px;width:21px;height:16px;line-height:16px;text-align:center;font-size:10.8px;color:#505050">5</div>
<div class="a" style="left:2px;top:263px;width:19px;height:1px;background:rgba(190,190,190,0.539)"></div>
<div class="t" style="left:-1px;top:264px;width:21px;height:16px;line-height:16px;text-align:center;font-size:10.8px;color:#505050">6</div>
<div class="a" style="left:2px;top:279px;width:19px;height:1px;background:rgba(190,190,190,0.517)"></div>
<div class="a" style="left:2px;top:280px;width:19px;height:1px;background:rgba(190,190,190,0.033)"></div>
<div class="t" style="left:-1px;top:280px;width:21px;height:16px;line-height:16px;text-align:center;font-size:10.8px;color:#505050">7</div>
<div class="a" style="left:2px;top:295px;width:19px;height:1px;background:rgba(190,190,190,0.495)"></div>
<div class="a" style="left:2px;top:296px;width:19px;height:1px;background:rgba(190,190,190,0.055)"></div>
<div class="t" style="left:-1px;top:296px;width:21px;height:16px;line-height:16px;text-align:center;font-size:10.8px;color:#505050">8</div>
<div class="a" style="left:2px;top:311px;width:19px;height:1px;background:rgba(190,190,190,0.473)"></div>
<div class="a" style="left:2px;top:312px;width:19px;height:1px;background:rgba(190,190,190,0.077)"></div>
<div class="t" style="left:-1px;top:312px;width:21px;height:16px;line-height:16px;text-align:center;font-size:10.8px;color:#505050">9</div>
<div class="a" style="left:2px;top:327px;width:19px;height:1px;background:rgba(190,190,190,0.451)"></div>
<div class="a" style="left:2px;top:328px;width:19px;height:1px;background:rgba(190,190,190,0.099)"></div>
<div class="t" style="left:-1px;top:328px;width:21px;height:16px;line-height:16px;text-align:center;font-size:10.8px;color:#505050">10</div>
<div class="a" style="left:2px;top:343px;width:19px;height:1px;background:rgba(190,190,190,0.429)"></div>
<div class="a" style="left:2px;top:344px;width:19px;height:1px;background:rgba(190,190,190,0.121)"></div>
<div class="t" style="left:-1px;top:344px;width:21px;height:16px;line-height:16px;text-align:center;font-size:10.8px;color:#505050">11</div>
<div class="a" style="left:2px;top:359px;width:19px;height:1px;background:rgba(190,190,190,0.407)"></div>
<div class="a" style="left:2px;top:360px;width:19px;height:1px;background:rgba(190,190,190,0.143)"></div>
<div class="t" style="left:-1px;top:360px;width:21px;height:16px;line-height:16px;text-align:center;font-size:10.8px;color:#505050">12</div>
<div class="a" style="left:2px;top:375px;width:19px;height:1px;background:rgba(190,190,190,0.385)"></div>
<div class="a" style="left:2px;top:376px;width:19px;height:1px;background:rgba(190,190,190,0.165)"></div>
<div class="t" style="left:-1px;top:377px;width:21px;height:16px;line-height:16px;text-align:center;font-size:10.8px;color:#505050">13</div>
<div class="a" style="left:2px;top:391px;width:19px;height:1px;background:rgba(190,190,190,0.363)"></div>
<div class="a" style="left:2px;top:392px;width:19px;height:1px;background:rgba(190,190,190,0.187)"></div>
<div class="t" style="left:-1px;top:393px;width:21px;height:16px;line-height:16px;text-align:center;font-size:10.8px;color:#505050">14</div>
<div class="a" style="left:2px;top:407px;width:19px;height:1px;background:rgba(190,190,190,0.341)"></div>
<div class="a" style="left:2px;top:408px;width:19px;height:1px;background:rgba(190,190,190,0.209)"></div>
<div class="t" style="left:-1px;top:409px;width:21px;height:16px;line-height:16px;text-align:center;font-size:10.8px;color:#505050">15</div>
<div class="a" style="left:2px;top:423px;width:19px;height:1px;background:rgba(190,190,190,0.319)"></div>
<div class="a" style="left:2px;top:424px;width:19px;height:1px;background:rgba(190,190,190,0.231)"></div>
<div class="t" style="left:-1px;top:425px;width:21px;height:16px;line-height:16px;text-align:center;font-size:10.8px;color:#505050">16</div>
<div class="a" style="left:2px;top:439px;width:19px;height:1px;background:rgba(190,190,190,0.297)"></div>
<div class="a" style="left:2px;top:440px;width:19px;height:1px;background:rgba(190,190,190,0.253)"></div>
<div class="t" style="left:-1px;top:441px;width:21px;height:16px;line-height:16px;text-align:center;font-size:10.8px;color:#505050">17</div>
<div class="a" style="left:2px;top:455px;width:19px;height:1px;background:rgba(190,190,190,0.275)"></div>
<div class="a" style="left:2px;top:456px;width:19px;height:1px;background:rgba(190,190,190,0.275)"></div>
<div class="t" style="left:-1px;top:457px;width:21px;height:16px;line-height:16px;text-align:center;font-size:10.8px;color:#505050">18</div>
<div class="a" style="left:2px;top:471px;width:19px;height:1px;background:rgba(190,190,190,0.253)"></div>
<div class="a" style="left:2px;top:472px;width:19px;height:1px;background:rgba(190,190,190,0.297)"></div>
<div class="t" style="left:-1px;top:473px;width:21px;height:16px;line-height:16px;text-align:center;font-size:10.8px;color:#505050">19</div>
<div class="a" style="left:2px;top:487px;width:19px;height:1px;background:rgba(190,190,190,0.231)"></div>
<div class="a" style="left:2px;top:488px;width:19px;height:1px;background:rgba(190,190,190,0.319)"></div>
<div class="t" style="left:-1px;top:489px;width:21px;height:16px;line-height:16px;text-align:center;font-size:10.8px;color:#505050">20</div>
<div class="a" style="left:2px;top:503px;width:19px;height:1px;background:rgba(190,190,190,0.209)"></div>
<div class="a" style="left:2px;top:504px;width:19px;height:1px;background:rgba(190,190,190,0.341)"></div>
<div class="t" style="left:-1px;top:505px;width:21px;height:16px;line-height:16px;text-align:center;font-size:10.8px;color:#505050">21</div>
<div class="a" style="left:2px;top:519px;width:19px;height:1px;background:rgba(190,190,190,0.187)"></div>
<div class="a" style="left:2px;top:520px;width:19px;height:1px;background:rgba(190,190,190,0.363)"></div>
<div class="t" style="left:-1px;top:521px;width:21px;height:16px;line-height:16px;text-align:center;font-size:10.8px;color:#505050">22</div>
<div class="a" style="left:2px;top:535px;width:19px;height:1px;background:rgba(190,190,190,0.165)"></div>
<div class="a" style="left:2px;top:536px;width:19px;height:1px;background:rgba(190,190,190,0.385)"></div>
<div class="t" style="left:-1px;top:537px;width:21px;height:16px;line-height:16px;text-align:center;font-size:10.8px;color:#505050">23</div>
<div class="a" style="left:2px;top:551px;width:19px;height:1px;background:rgba(190,190,190,0.143)"></div>
<div class="a" style="left:2px;top:552px;width:19px;height:1px;background:rgba(190,190,190,0.407)"></div>
<div class="t" style="left:-1px;top:553px;width:21px;height:16px;line-height:16px;text-align:center;font-size:10.8px;color:#505050">24</div>
<div class="a" style="left:2px;top:567px;width:19px;height:1px;background:rgba(190,190,190,0.121)"></div>
<div class="a" style="left:2px;top:568px;width:19px;height:1px;background:rgba(190,190,190,0.429)"></div>
<div class="t" style="left:-1px;top:569px;width:21px;height:16px;line-height:16px;text-align:center;font-size:10.8px;color:#505050">25</div>
<div class="a" style="left:2px;top:583px;width:19px;height:1px;background:rgba(190,190,190,0.099)"></div>
<div class="a" style="left:2px;top:584px;width:19px;height:1px;background:rgba(190,190,190,0.451)"></div>
<div class="t" style="left:-1px;top:585px;width:21px;height:16px;line-height:16px;text-align:center;font-size:10.8px;color:#505050">26</div>
<div class="a" style="left:2px;top:599px;width:19px;height:1px;background:rgba(190,190,190,0.077)"></div>
<div class="a" style="left:2px;top:600px;width:19px;height:1px;background:rgba(190,190,190,0.473)"></div>
<div class="t" style="left:-1px;top:601px;width:21px;height:16px;line-height:16px;text-align:center;font-size:10.8px;color:#505050">27</div>
<div class="a" style="left:2px;top:615px;width:19px;height:1px;background:rgba(190,190,190,0.055)"></div>
<div class="a" style="left:2px;top:616px;width:19px;height:1px;background:rgba(190,190,190,0.495)"></div>
<div class="t" style="left:-1px;top:617px;width:21px;height:16px;line-height:16px;text-align:center;font-size:10.8px;color:#505050">28</div>
<div class="a" style="left:2px;top:631px;width:19px;height:1px;background:rgba(190,190,190,0.033)"></div>
<div class="a" style="left:2px;top:632px;width:19px;height:1px;background:rgba(190,190,190,0.517)"></div>
<div class="t" style="left:-1px;top:633px;width:21px;height:16px;line-height:16px;text-align:center;font-size:10.8px;color:#505050">29</div>
<div class="a" style="left:2px;top:648px;width:19px;height:1px;background:rgba(190,190,190,0.539)"></div>
<div class="t" style="left:-1px;top:649px;width:21px;height:16px;line-height:16px;text-align:center;font-size:10.8px;color:#505050">30</div>
<div class="a" style="left:2px;top:664px;width:19px;height:1px;background:rgba(190,190,190,0.539)"></div>
<div class="t" style="left:-1px;top:665px;width:21px;height:16px;line-height:16px;text-align:center;font-size:10.8px;color:#505050">31</div>
<div class="a" style="left:2px;top:680px;width:19px;height:1px;background:rgba(190,190,190,0.517)"></div>
<div class="a" style="left:2px;top:681px;width:19px;height:1px;background:rgba(190,190,190,0.033)"></div>
<div class="t" style="left:-1px;top:681px;width:21px;height:16px;line-height:16px;text-align:center;font-size:10.8px;color:#505050">32</div>
<div class="a" style="left:2px;top:696px;width:19px;height:1px;background:rgba(190,190,190,0.495)"></div>
<div class="a" style="left:2px;top:697px;width:19px;height:1px;background:rgba(190,190,190,0.055)"></div>
<div class="t" style="left:-1px;top:697px;width:21px;height:16px;line-height:16px;text-align:center;font-size:10.8px;color:#505050">33</div>
<div class="a" style="left:21px;top:163px;width:1px;height:547px;background:#c8c8c8"></div>
<div class="t" style="left:21px;top:163px;width:227px;height:16px;line-height:16px;text-align:center;font-size:11px;color:#5a5a5a">A</div>
<div class="a" style="left:248px;top:164px;width:1px;height:15px;background:#dcdcdc"></div>
<div class="t" style="left:248px;top:163px;width:88px;height:16px;line-height:16px;text-align:center;font-size:11px;color:#5a5a5a">B</div>
<div class="a" style="left:336px;top:164px;width:1px;height:15px;background:#dcdcdc"></div>
<div class="t" style="left:336px;top:163px;width:91px;height:16px;line-height:16px;text-align:center;font-size:11px;color:#5a5a5a">C</div>
<div class="a" style="left:427px;top:164px;width:1px;height:15px;background:#dcdcdc"></div>
<div class="t" style="left:427px;top:163px;width:147px;height:16px;line-height:16px;text-align:center;font-size:11px;color:#5a5a5a">D</div>
<div class="a" style="left:574px;top:164px;width:1px;height:15px;background:#dcdcdc"></div>
<div class="t" style="left:574px;top:163px;width:106px;height:16px;line-height:16px;text-align:center;font-size:11px;color:#5a5a5a">E</div>
<div class="a" style="left:680px;top:164px;width:1px;height:15px;background:#dcdcdc"></div>
<div class="t" style="left:680px;top:163px;width:82px;height:16px;line-height:16px;text-align:center;font-size:11px;color:#5a5a5a">F</div>
<div class="a" style="left:762px;top:164px;width:1px;height:15px;background:#dcdcdc"></div>
<div class="t" style="left:762px;top:163px;width:176px;height:16px;line-height:16px;text-align:center;font-size:11px;color:#5a5a5a">G</div>
<div class="a" style="left:938px;top:164px;width:1px;height:15px;background:#dcdcdc"></div>
<div class="t" style="left:938px;top:163px;width:67px;height:16px;line-height:16px;text-align:center;font-size:11px;color:#5a5a5a">H</div>
<div class="a" style="left:1005px;top:164px;width:1px;height:15px;background:#dcdcdc"></div>
<div class="t" style="left:1005px;top:163px;width:104px;height:16px;line-height:16px;text-align:center;font-size:11px;color:#5a5a5a">I</div>
<div class="a" style="left:1109px;top:164px;width:1px;height:15px;background:#dcdcdc"></div>
<div class="t" style="left:1109px;top:163px;width:97px;height:16px;line-height:16px;text-align:center;font-size:11px;color:#5a5a5a">J</div>
<div class="a" style="left:1206px;top:164px;width:1px;height:15px;background:#dcdcdc"></div>
<div class="t" style="left:1206px;top:163px;width:63px;height:16px;line-height:16px;text-align:center;font-size:11px;color:#5a5a5a">K</div>
<div class="a" style="left:1269px;top:164px;width:1px;height:15px;background:#dcdcdc"></div>
<div class="t" style="left:1269px;top:163px;width:74px;height:16px;line-height:16px;text-align:center;font-size:11px;color:#5a5a5a">L</div>
<div class="a" style="left:1343px;top:164px;width:1px;height:15px;background:#dcdcdc"></div>
<div class="t" style="left:1343px;top:163px;width:66px;height:16px;line-height:16px;text-align:center;font-size:11px;color:#5a5a5a">M</div>
<div class="a" style="left:1409px;top:164px;width:1px;height:15px;background:#dcdcdc"></div>
<div class="t" style="left:1409px;top:163px;width:56px;height:16px;line-height:16px;text-align:center;font-size:11px;color:#5a5a5a">N</div>
<div class="a" style="left:1465px;top:164px;width:1px;height:15px;background:#dcdcdc"></div>
<div class="t" style="left:1465px;top:163px;width:50px;height:16px;line-height:16px;text-align:center;font-size:11px;color:#5a5a5a">O</div>
<div class="a" style="left:1515px;top:164px;width:1px;height:15px;background:#dcdcdc"></div>
<div class="a" style="left:0;top:178px;width:1515px;height:1px;background:#c8c8c8"></div>
<svg style="left:0;top:163px" width="21" height="16"><polygon points="9,13 18,13 18,4" fill="#dcdcdc"/></svg>
<div class="a" style="left:6.5px;top:132.5px;width:101px;height:23px;background:#fff;border:1px solid #e0e0e0;border-radius:4px"></div>
<svg style="left:92px;top:142.5px" width="11" height="6" viewBox="0 0 11 6"><path d="M0.6 0.6L5.5 5.2 10.4 0.6" fill="none" stroke="#424242" stroke-width="1.1"/></svg>
<div class="a" style="left:117.3px;top:139.8px;width:2px;height:2px;background:#3a3a3a;border-radius:1px"></div>
<div class="a" style="left:117.3px;top:144.3px;width:2px;height:2px;background:#3a3a3a;border-radius:1px"></div>
<div class="a" style="left:117.3px;top:148.8px;width:2px;height:2px;background:#3a3a3a;border-radius:1px"></div>
<div class="a" style="left:128.6px;top:132.5px;width:84.5px;height:23px;background:#fff;border:1px solid #e0e0e0;border-radius:4px"></div>
<svg style="left:134.5px;top:138px" width="13" height="13" viewBox="0 0 13 13"><path d="M0.8 0.8L12.2 12.2M12.2 0.8L0.8 12.2" stroke="#9a9a9a" stroke-width="1"/></svg>
<svg style="left:157px;top:138px" width="16" height="13" viewBox="0 0 16 13"><path d="M0.8 6.8L5.5 11.8 15.3 0.8" fill="none" stroke="#9a9a9a" stroke-width="1"/></svg>
<svg style="left:201.5px;top:142.5px" width="10" height="5" viewBox="0 0 10 5"><path d="M0.5 0.5L5 4.5 9.5 0.5" fill="none" stroke="#8a8a8a" stroke-width="1"/></svg>
<div class="a" style="left:218.3px;top:132.5px;width:1310px;height:23px;background:#fff;border:1px solid #e0e0e0;border-radius:4px"></div>
<svg style="left:1513.5px;top:141.5px" width="11" height="6" viewBox="0 0 11 6"><path d="M0.6 0.6L5.5 5.2 10.4 0.6" fill="none" stroke="#424242" stroke-width="1.1"/></svg>
<div class="a" style="left:1518px;top:163px;width:17px;height:548.5px;background:#f6f6f6;border-radius:8.5px"></div>
<svg style="left:1522px;top:167px" width="10" height="8" viewBox="0 0 10 8"><path d="M5 0.6L9.3 7.4H0.7z" fill="#6f6f6f" stroke="#6f6f6f" stroke-width="0.6" stroke-linejoin="round"/></svg>
<div class="a" style="left:1522.3px;top:179.2px;width:9px;height:17px;background:#707070;border-radius:4.5px"></div>
<svg style="left:1522px;top:700px" width="10" height="8" viewBox="0 0 10 8"><path d="M5 7.4L9.3 0.6H0.7z" fill="#6f6f6f" stroke="#6f6f6f" stroke-width="0.6" stroke-linejoin="round"/></svg>
<svg style="left:24px;top:720px" width="7" height="11" viewBox="0 0 7 11"><path d="M6 0.6L1 5.5 6 10.4" fill="none" stroke="#b0b0b0" stroke-width="1.1"/></svg>
<svg style="left:56.5px;top:720px" width="7" height="11" viewBox="0 0 7 11"><path d="M1 0.6L6 5.5 1 10.4" fill="none" stroke="#8a8a8a" stroke-width="1.1"/></svg>
<div class="a" style="left:111.3px;top:710px;width:49.7px;height:28px;background:#fff;border-radius:0 0 5px 5px;box-shadow:0 1px 1px rgba(0,0,0,0.08)"></div>
<div class="a" style="left:119px;top:733.3px;width:34px;height:2px;background:#107c41;border-radius:1px"></div>
<div class="a" style="left:165px;top:716.5px;width:1px;height:18.5px;background:#d0d0d0"></div>
<svg style="left:207.5px;top:719.5px" width="12" height="12" viewBox="0 0 12 12"><path d="M6 0.5V11.5M0.5 6H11.5" stroke="#3b3026" stroke-width="1.2"/></svg>
<div class="a" style="left:923.8px;top:721.5px;width:2px;height:2px;background:#3a3a3a;border-radius:1px"></div>
<div class="a" style="left:923.8px;top:725.5px;width:2px;height:2px;background:#3a3a3a;border-radius:1px"></div>
<div class="a" style="left:923.8px;top:729.5px;width:2px;height:2px;background:#3a3a3a;border-radius:1px"></div>
<div class="a" style="left:941px;top:717px;width:577px;height:16.5px;background:#f6f6f6;border-radius:8px"></div>
<svg style="left:945.5px;top:721px" width="7" height="9" viewBox="0 0 7 9"><path d="M0.5 4.5L6.5 0.5V8.5z" fill="#6a6a6a"/></svg>
<div class="a" style="left:957.4px;top:720.6px;width:430.5px;height:9px;background:#6f6f6f;border-radius:4.5px"></div>
<svg style="left:1506px;top:721px" width="7" height="9" viewBox="0 0 7 9"><path d="M6.5 4.5L0.5 0.5V8.5z" fill="#6a6a6a"/></svg>
<div class="a" style="left:0;top:742px;width:1536px;height:19px;background:#f4f4f4"></div>
<div class="a" style="left:0;top:742px;width:1536px;height:1px;background:#fafafa"></div>
<svg style="left:44px;top:742px" width="22" height="19" viewBox="44 742 22 19">
      <circle cx="54.25" cy="748.1" r="1.75" fill="none" stroke="#3a3a3a" stroke-width="1.05"/>
      <path d="M56.6 751.6L58.7 750.9C59.7 750.6 60.4 750 60.1 749.2 59.8 748.5 58.9 748.6 57.9 749 56 749.7 52.5 749.7 50.6 749 49.6 748.6 48.7 748.5 48.4 749.2 48.1 750 48.9 750.6 49.9 750.9L51.7 751.5C51.9 754 51.5 756.4 50.9 758.1 50.6 758.9 51.6 759.4 52.1 758.7L54.5 755.4" fill="none" stroke="#3a3a3a" stroke-width="1.05" stroke-linejoin="round"/>
      <path d="M56 754L61.6 759.5M61.2 753.7L56.4 759.6" stroke="#4a4a4a" stroke-width="0.95"/>
    </svg>
<div class="a" style="left:1235.4px;top:743px;width:40px;height:18px;background:#dcdcdc"></div>
<svg style="left:1248px;top:745.5px" width="15" height="14" viewBox="0 0 15 14">
      <rect x="1.1" y="1.1" width="12.6" height="12.2" rx="0.8" fill="none" stroke="#4a4a4a" stroke-width="1.4"/>
      <path d="M5.3 1.1V13.3M9.5 1.1V13.3M1.1 5.1H13.7M1.1 9.2H13.7" stroke="#4a4a4a" stroke-width="1.3"/>
    </svg>
<svg style="left:1288px;top:745.5px" width="16" height="14" viewBox="0 0 16 14">
      <rect x="1.1" y="1.1" width="13.6" height="12.2" rx="0.8" fill="none" stroke="#5a5a5a" stroke-width="1.2"/>
      <rect x="4.3" y="3.1" width="7.2" height="8.2" fill="none" stroke="#3a3a3a" stroke-width="1.1"/>
      <path d="M5.8 5.3H10M5.8 7.2H10M5.8 9.1H10" stroke="#5a5a5a" stroke-width="0.8"/>
    </svg>
<svg style="left:1328px;top:745.5px" width="16" height="14" viewBox="0 0 16 14">
      <rect x="1.1" y="1.1" width="13.6" height="12.2" rx="0.8" fill="none" stroke="#5a5a5a" stroke-width="1.2"/>
      <path d="M5.1 1.1V7.8M9 1.1V7.8M1.1 7.8H9.4" fill="none" stroke="#4a4a4a" stroke-width="1.1"/>
    </svg>
<div class="a" style="left:1361.5px;top:753px;width:8px;height:1px;background:#5a5a5a"></div>
<div class="a" style="left:1374.3px;top:753px;width:100px;height:1px;background:#8a8a8a"></div>
<div class="a" style="left:1424px;top:750px;width:1px;height:7px;background:#8a8a8a"></div>
<div class="a" style="left:1414.5px;top:747.5px;width:4px;height:10.5px;background:#5a5a5a;border-radius:1px"></div>
<svg style="left:1478.5px;top:748.5px" width="9" height="9" viewBox="0 0 9 9"><path d="M4.5 0V9M0 4.5H9" stroke="#5a5a5a" stroke-width="1"/></svg>
<div class="t" style="left:15.6px;top:3.00px;font-size:14px;color:#333333;font-weight:normal;font-style:normal;font-family:'Liberation Sans', sans-serif;transform:scaleX(0.9386);transform-origin:0 0;">Arkiv</div>
<div class="t" style="left:65.9px;top:3.00px;font-size:14px;color:#333333;font-weight:normal;font-style:normal;font-family:'Liberation Sans', sans-serif;transform:scaleX(0.9606);transform-origin:0 0;-webkit-text-stroke:0.45px #333;">Start</div>
<div class="t" style="left:113.3px;top:3.00px;font-size:14px;color:#333333;font-weight:normal;font-style:normal;font-family:'Liberation Sans', sans-serif;transform:scaleX(0.9840);transform-origin:0 0;">Infoga</div>
<div class="t" style="left:171.9px;top:3.00px;font-size:14px;color:#333333;font-weight:normal;font-style:normal;font-family:'Liberation Sans', sans-serif;transform:scaleX(0.9567);transform-origin:0 0;">Sidlayout</div>
<div class="t" style="left:246.9px;top:3.00px;font-size:14px;color:#333333;font-weight:normal;font-style:normal;font-family:'Liberation Sans', sans-serif;transform:scaleX(0.9560);transform-origin:0 0;">Formler</div>
<div class="t" style="left:312.5px;top:3.00px;font-size:14px;color:#333333;font-weight:normal;font-style:normal;font-family:'Liberation Sans', sans-serif;transform:scaleX(0.9502);transform-origin:0 0;">Data</div>
<div class="t" style="left:360.2px;top:3.00px;font-size:14px;color:#333333;font-weight:normal;font-style:normal;font-family:'Liberation Sans', sans-serif;transform:scaleX(0.8977);transform-origin:0 0;">Granska</div>
<div class="t" style="left:427.9px;top:3.00px;font-size:14px;color:#333333;font-weight:normal;font-style:normal;font-family:'Liberation Sans', sans-serif;transform:scaleX(0.9043);transform-origin:0 0;">Visa</div>
<div class="t" style="left:471.2px;top:3.00px;font-size:14px;color:#333333;font-weight:normal;font-style:normal;font-family:'Liberation Sans', sans-serif;transform:scaleX(0.9820);transform-origin:0 0;">Automatisera</div>
<div class="t" style="left:571.8px;top:3.00px;font-size:14px;color:#333333;font-weight:normal;font-style:normal;font-family:'Liberation Sans', sans-serif;transform:scaleX(0.9591);transform-origin:0 0;">Hjälp</div>
<div class="t" style="left:1354.5px;top:3.00px;font-size:13.6px;color:#333333;font-weight:normal;font-style:normal;font-family:'Liberation Sans', sans-serif;transform:scaleX(1.0067);transform-origin:0 0;">Kommentarer</div>
<div class="t" style="left:1474px;top:3.00px;font-size:13.8px;color:#ffffff;font-weight:normal;font-style:normal;font-family:'Liberation Sans', sans-serif;transform:scaleX(0.9768);transform-origin:0 0;-webkit-text-stroke:0.4px #fff;">Delning</div>
<div class="t" style="left:34.7px;top:109.00px;font-size:10.8px;color:#424242;font-weight:normal;font-style:normal;font-family:'Liberation Sans', sans-serif;transform:scaleX(0.9822);transform-origin:0 0;">Urklipp</div>
<div class="t" style="left:203.1px;top:109.00px;font-size:10.8px;color:#424242;font-weight:normal;font-style:normal;font-family:'Liberation Sans', sans-serif;transform:scaleX(0.8857);transform-origin:0 0;">Tecken</div>
<div class="t" style="left:479.4px;top:109.00px;font-size:10.8px;color:#424242;font-weight:normal;font-style:normal;font-family:'Liberation Sans', sans-serif;transform:scaleX(0.9359);transform-origin:0 0;">Justering</div>
<div class="t" style="left:739.4px;top:109.00px;font-size:10.8px;color:#424242;font-weight:normal;font-style:normal;font-family:'Liberation Sans', sans-serif;transform:scaleX(0.8622);transform-origin:0 0;">Tal</div>
<div class="t" style="left:932.3px;top:109.00px;font-size:10.8px;color:#424242;font-weight:normal;font-style:normal;font-family:'Liberation Sans', sans-serif;transform:scaleX(0.9388);transform-origin:0 0;">Format</div>
<div class="t" style="left:1121.8px;top:109.00px;font-size:10.8px;color:#424242;font-weight:normal;font-style:normal;font-family:'Liberation Sans', sans-serif;transform:scaleX(0.9185);transform-origin:0 0;">Celler</div>
<div class="t" style="left:1272.6px;top:109.00px;font-size:10.8px;color:#424242;font-weight:normal;font-style:normal;font-family:'Liberation Sans', sans-serif;transform:scaleX(0.9767);transform-origin:0 0;">Redigering</div>
<div class="t" style="left:1403px;top:109.00px;font-size:10.8px;color:#424242;font-weight:normal;font-style:normal;font-family:'Liberation Sans', sans-serif;transform:scaleX(0.9903);transform-origin:0 0;">Tillägg</div>
<div class="t" style="left:22.8px;top:69.00px;font-size:12px;color:#333333;font-weight:normal;font-style:normal;font-family:'Liberation Sans', sans-serif;transform:scaleX(0.9658);transform-origin:0 0;">Klistra</div>
<div class="t" style="left:28px;top:85.00px;font-size:12px;color:#333333;font-weight:normal;font-style:normal;font-family:'Liberation Sans', sans-serif;">in</div>
<div class="t" style="left:120.6px;top:43.00px;font-size:12.3px;color:#333333;font-weight:normal;font-style:normal;font-family:'Liberation Sans', sans-serif;transform:scaleX(0.9820);transform-origin:0 0;">Aptos Narrow</div>
<div class="t" style="left:237.8px;top:43.00px;font-size:12.3px;color:#333333;font-weight:normal;font-style:normal;font-family:'Liberation Sans', sans-serif;transform:scaleX(0.8578);transform-origin:0 0;">11</div>
<div class="t" style="left:126px;top:73.00px;font-size:13.5px;color:#3b3026;font-weight:bold;font-style:normal;font-family:'Liberation Sans', sans-serif;transform:scaleX(0.8610);transform-origin:0 0;">F</div>
<div class="t" style="left:150.3px;top:73.00px;font-size:13.5px;color:#5c5148;font-weight:normal;font-style:italic;font-family:'Liberation Sans', sans-serif;transform:scaleX(1.0439);transform-origin:0 0;">K</div>
<div class="t" style="left:175.8px;top:73.00px;font-size:13.5px;color:#5c5148;font-weight:normal;font-style:normal;font-family:'Liberation Sans', sans-serif;transform:scaleX(0.9437);transform-origin:0 0;">U</div>
<div class="t" style="left:517px;top:43.00px;font-size:12px;color:#333333;font-weight:normal;font-style:normal;font-family:'Liberation Sans', sans-serif;transform:scaleX(0.9939);transform-origin:0 0;">Radbryt text</div>
<div class="t" style="left:517px;top:75.00px;font-size:12px;color:#333333;font-weight:normal;font-style:normal;font-family:'Liberation Sans', sans-serif;transform:scaleX(0.9805);transform-origin:0 0;">Centrera över kolumner</div>
<div class="t" style="left:684.5px;top:43.00px;font-size:12.3px;color:#333333;font-weight:normal;font-style:normal;font-family:'Liberation Sans', sans-serif;transform:scaleX(0.9999);transform-origin:0 0;">Allmänt</div>
<div class="t" style="left:788px;top:73.00px;font-size:9.3px;color:#5c5148;font-weight:normal;font-style:normal;font-family:'Liberation Sans', sans-serif;transform:scaleX(1.0576);transform-origin:0 0;">.0</div>
<div class="t" style="left:785.5px;top:80.00px;font-size:9.3px;color:#5c5148;font-weight:normal;font-style:normal;font-family:'Liberation Sans', sans-serif;transform:scaleX(0.8279);transform-origin:0 0;">.00</div>
<div class="t" style="left:809px;top:73.00px;font-size:9.3px;color:#5c5148;font-weight:normal;font-style:normal;font-family:'Liberation Sans', sans-serif;transform:scaleX(0.9517);transform-origin:0 0;">.00</div>
<div class="t" style="left:814.5px;top:80.00px;font-size:9.3px;color:#5c5148;font-weight:normal;font-style:normal;font-family:'Liberation Sans', sans-serif;transform:scaleX(0.8770);transform-origin:0 0;">.0</div>
<div class="t" style="left:849.5px;top:68.00px;font-size:12.5px;color:#333333;font-weight:normal;font-style:normal;font-family:'Liberation Sans', sans-serif;transform:scaleX(0.9427);transform-origin:0 0;">Villkorsstyrd</div>
<div class="t" style="left:844.4px;top:84.00px;font-size:12.5px;color:#333333;font-weight:normal;font-style:normal;font-family:'Liberation Sans', sans-serif;transform:scaleX(0.9839);transform-origin:0 0;">formatering</div>
<div class="t" style="left:930.8px;top:68.00px;font-size:12.5px;color:#333333;font-weight:normal;font-style:normal;font-family:'Liberation Sans', sans-serif;transform:scaleX(0.9210);transform-origin:0 0;">Formatera</div>
<div class="t" style="left:924px;top:84.00px;font-size:12.5px;color:#333333;font-weight:normal;font-style:normal;font-family:'Liberation Sans', sans-serif;transform:scaleX(0.9689);transform-origin:0 0;">som tabell</div>
<div class="t" style="left:996.9px;top:68.00px;font-size:12.5px;color:#333333;font-weight:normal;font-style:normal;font-family:'Liberation Sans', sans-serif;transform:scaleX(0.9797);transform-origin:0 0;">Cellformat</div>
<div class="t" style="left:1074.9px;top:69.00px;font-size:12.5px;color:#333333;font-weight:normal;font-style:normal;font-family:'Liberation Sans', sans-serif;transform:scaleX(0.9582);transform-origin:0 0;">Infoga</div>
<div class="t" style="left:1117.8px;top:69.00px;font-size:12.5px;color:#333333;font-weight:normal;font-style:normal;font-family:'Liberation Sans', sans-serif;transform:scaleX(0.9316);transform-origin:0 0;">Ta bort</div>
<div class="t" style="left:1159.7px;top:67.00px;font-size:12.5px;color:#333333;font-weight:normal;font-style:normal;font-family:'Liberation Sans', sans-serif;transform:scaleX(0.9397);transform-origin:0 0;">Format</div>
<div class="t" style="left:1259px;top:68.00px;font-size:12.5px;color:#333333;font-weight:normal;font-style:normal;font-family:'Liberation Sans', sans-serif;transform:scaleX(0.9316);transform-origin:0 0;">Sortera och</div>
<div class="t" style="left:1266px;top:84.00px;font-size:12.5px;color:#333333;font-weight:normal;font-style:normal;font-family:'Liberation Sans', sans-serif;transform:scaleX(1.0078);transform-origin:0 0;">filtrera</div>
<div class="t" style="left:1331.7px;top:68.00px;font-size:12.5px;color:#333333;font-weight:normal;font-style:normal;font-family:'Liberation Sans', sans-serif;transform:scaleX(0.9210);transform-origin:0 0;">Sök och</div>
<div class="t" style="left:1325.8px;top:84.00px;font-size:12.5px;color:#333333;font-weight:normal;font-style:normal;font-family:'Liberation Sans', sans-serif;transform:scaleX(0.9205);transform-origin:0 0;">markera</div>
<div class="t" style="left:1400.8px;top:67.00px;font-size:12.5px;color:#333333;font-weight:normal;font-style:normal;font-family:'Liberation Sans', sans-serif;transform:scaleX(1.0066);transform-origin:0 0;">Tillägg</div>
<div class="t" style="left:12.7px;top:139.00px;font-size:12.6px;color:#242424;font-weight:normal;font-style:normal;font-family:'Liberation Sans', sans-serif;transform:scaleX(0.9176);transform-origin:0 0;">R27</div>
<div class="t" style="left:181.5px;top:136.00px;font-size:15px;color:#3b3026;font-weight:normal;font-style:italic;font-family:'Liberation Serif', serif;transform:scaleX(1.4318);transform-origin:0 0;">fx</div>
<div class="t" style="left:229px;top:139.00px;font-size:12.6px;color:#242424;font-weight:normal;font-style:normal;font-family:'Liberation Sans', sans-serif;transform:scaleX(1.0020);transform-origin:0 0;">Henrik Nils Erik Öhrn</div>
<div class="t" style="left:120px;top:717.00px;font-size:13.6px;color:#242424;font-weight:normal;font-style:normal;font-family:'Liberation Sans', sans-serif;transform:scaleX(0.9290);transform-origin:0 0;-webkit-text-stroke:0.4px #242424;">Blad1</div>
<div class="t" style="left:9.7px;top:748.00px;font-size:10.5px;color:#424242;font-weight:normal;font-style:normal;font-family:'Liberation Sans', sans-serif;transform:scaleX(0.9693);transform-origin:0 0;">Klar</div>
<div class="t" style="left:65.3px;top:748.00px;font-size:10.8px;color:#242424;font-weight:normal;font-style:normal;font-family:'Liberation Sans', sans-serif;transform:scaleX(1.0665);transform-origin:0 0;-webkit-text-stroke:0.45px #242424;">Tillgänglighet: Utforska</div>
<div class="t" style="left:1500px;top:748.00px;font-size:10.5px;color:#424242;font-weight:normal;font-style:normal;font-family:'Liberation Sans', sans-serif;transform:scaleX(0.9610);transform-origin:0 0;">85 %</div>
<div class="t" style="left:23.9px;top:185.00px;font-size:13.3px;color:#000;font-weight:normal;font-style:normal;font-family:'Liberation Sans', sans-serif;transform:scaleX(0.9471);transform-origin:0 0;">Bostadsrättsförening</div>
<div class="t" style="left:250.4px;top:185.00px;font-size:13.3px;color:#000;font-weight:normal;font-style:normal;font-family:'Liberation Sans', sans-serif;transform:scaleX(0.9099);transform-origin:0 0;">Org nummer</div>
<div class="t" style="left:339.5px;top:185.00px;font-size:13.3px;color:#000;font-weight:normal;font-style:normal;font-family:'Liberation Sans', sans-serif;transform:scaleX(0.9015);transform-origin:0 0;">Län</div>
<div class="t" style="left:428.9px;top:185.00px;font-size:13.3px;color:#000;font-weight:normal;font-style:normal;font-family:'Liberation Sans', sans-serif;transform:scaleX(0.8675);transform-origin:0 0;">Adress</div>
<div class="t" style="left:577.6px;top:185.00px;font-size:13.3px;color:#000;font-weight:normal;font-style:normal;font-family:'Liberation Sans', sans-serif;transform:scaleX(0.9380);transform-origin:0 0;">Postnummer</div>
<div class="t" style="left:683.5px;top:185.00px;font-size:13.3px;color:#000;font-weight:normal;font-style:normal;font-family:'Liberation Sans', sans-serif;transform:scaleX(0.9306);transform-origin:0 0;">Telefon</div>
<div class="t" style="left:765.3px;top:185.00px;font-size:13.3px;color:#000;font-weight:normal;font-style:normal;font-family:'Liberation Sans', sans-serif;transform:scaleX(0.9047);transform-origin:0 0;">E-Post</div>
<div class="t" style="left:941.1999999999999px;top:185.00px;font-size:13.3px;color:#000;font-weight:normal;font-style:normal;font-family:'Liberation Sans', sans-serif;transform:scaleX(0.8687);transform-origin:0 0;">Byggår</div>
<div class="t" style="left:1011.4px;top:185.00px;font-size:13.3px;color:#000;font-weight:normal;font-style:normal;font-family:'Liberation Sans', sans-serif;transform:scaleX(0.9064);transform-origin:0 0;">Antal Lägenheter</div>
<div class="t" style="left:1121.7px;top:185.00px;font-size:13.3px;color:#000;font-weight:normal;font-style:normal;font-family:'Liberation Sans', sans-serif;transform:scaleX(0.9143);transform-origin:0 0;">Lägenhetsyta</div>
<div class="t" style="left:1328.8px;top:183.00px;font-size:14.5px;color:#000;font-weight:normal;font-style:normal;font-family:'Liberation Sans', sans-serif;transform:scaleX(0.9874);transform-origin:0 0;">Antal rum i lägenheterna</div>
</body></html>
